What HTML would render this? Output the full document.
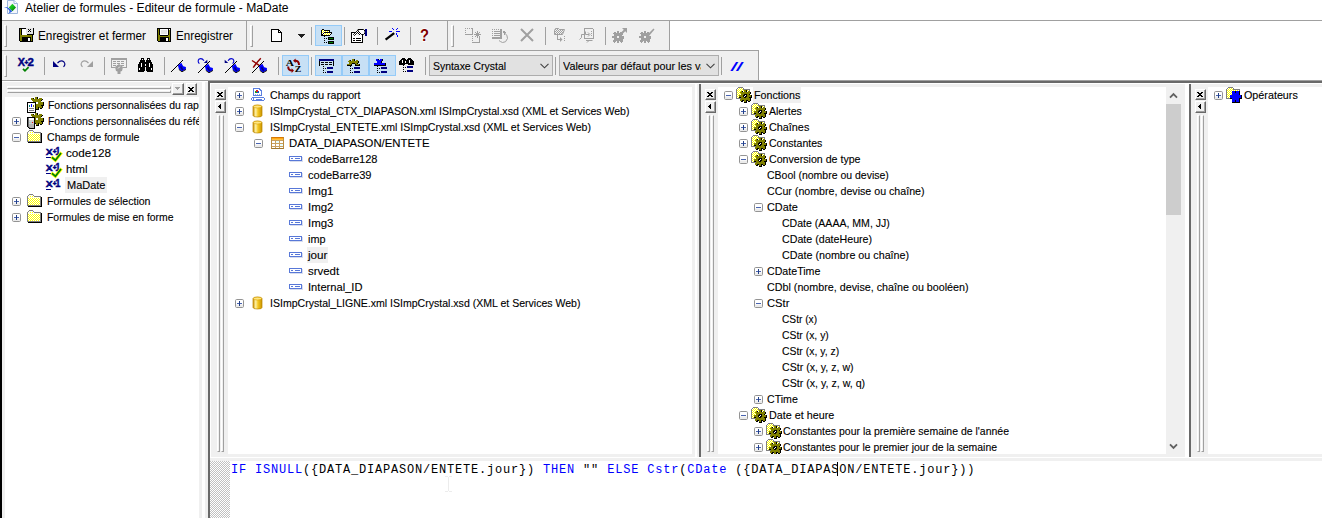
<!DOCTYPE html>
<html lang="fr"><head><meta charset="utf-8"><title>Atelier de formules - Editeur de formule - MaDate</title>
<style>
html,body{margin:0;padding:0;}
body{width:1322px;height:518px;position:relative;overflow:hidden;background:#fff;font-family:"Liberation Sans",sans-serif;}
.a{position:absolute;}
.t{position:absolute;white-space:pre;transform-origin:0 0;line-height:1;}
svg{position:absolute;overflow:visible;}
.mono{font-family:"Liberation Mono",monospace;}
.s{-webkit-text-stroke:0.12px currentColor;}

</style></head>
<body>
<svg width="0" height="0" style="left:0;top:0"><defs><pattern id="dy" width="2" height="2" patternUnits="userSpaceOnUse"><rect width="2" height="2" fill="#fff"/><rect width="1" height="1" fill="#ff0"/><rect x="1" y="1" width="1" height="1" fill="#ff0"/></pattern><pattern id="dk" width="2" height="2" patternUnits="userSpaceOnUse"><rect width="2" height="2" fill="#fff"/><rect width="1" height="1" fill="#000"/><rect x="1" y="1" width="1" height="1" fill="#000"/></pattern><pattern id="dg" width="2" height="2" patternUnits="userSpaceOnUse"><rect width="2" height="2" fill="#f0f0f0"/><rect width="1" height="1" fill="#a0a0a0"/><rect x="1" y="1" width="1" height="1" fill="#a0a0a0"/></pattern></defs></svg>
<div class="a" style="left:0px;top:0px;width:2px;height:518px;background:#000;"></div>
<svg style="left:3px;top:0px" width="16" height="15" viewBox="0 0 16 15" shape-rendering="crispEdges"><defs><linearGradient id="tig" x1="0" y1="0" x2="1" y2="1"><stop offset="0" stop-color="#30e030"/><stop offset="0.55" stop-color="#10b818"/><stop offset="1" stop-color="#004800"/></linearGradient></defs><path d="M4.5 0.5 H11 L14.5 3.5 V13.5 H4.5 Z" fill="#f4f7fc" stroke="#9db6dc" stroke-width="1" shape-rendering="auto"/><path d="M11 0.5 V3.5 H14.5" fill="#fff" stroke="#9db6dc" stroke-width="1" shape-rendering="auto"/><path d="M9.4 3.8 L13 7.5 L9.4 11.2 L5.8 7.5 Z" fill="url(#tig)" shape-rendering="auto"/><path d="M1 7 Q6.5 6.6 9.2 11.6 L5 13.9 Q7.4 12 6.2 10.2 Q4.8 8 1 7 Z" fill="#2a5fe0" shape-rendering="auto"/></svg>
<span class="t" id="t0" style="left:25px;top:2px;font-size:12px;color:#000;transform:scaleX(1.0078);">Atelier de formules - Editeur de formule - MaDate</span>
<div class="a" style="left:2px;top:20px;width:1320px;height:1px;background:#a0a0a0;"></div>
<div class="a" style="left:2px;top:21px;width:667px;height:29px;background:#f0f0f0;"></div>
<div class="a" style="left:669px;top:21px;width:1px;height:29px;background:#a0a0a0;"></div>
<div class="a" style="left:2px;top:50px;width:757px;height:1px;background:#a0a0a0;"></div>
<div class="a" style="left:2px;top:51px;width:756px;height:29px;background:#f0f0f0;"></div>
<div class="a" style="left:758px;top:51px;width:1px;height:29px;background:#a0a0a0;"></div>
<div class="a" style="left:2px;top:80px;width:1320px;height:1px;background:#a0a0a0;"></div>
<div class="a" style="left:208px;top:81px;width:1114px;height:2px;background:#696969;"></div>
<div class="a" style="left:4px;top:25px;width:3px;height:22px;background:#f0f0f0;border-left:1px solid #fff;border-top:1px solid #fff;border-right:1px solid #a0a0a0;border-bottom:1px solid #a0a0a0;box-sizing:border-box;"></div>
<svg style="left:19px;top:28px" width="15" height="14" viewBox="0 0 15 14" shape-rendering="crispEdges"><rect x="0" y="0" width="7" height="1" fill="#000"/><rect x="7" y="0" width="7" height="1" fill="#e4e4e4"/><rect x="14" y="0" width="1" height="1" fill="#000"/><rect x="0" y="1" width="1" height="1" fill="#000"/><rect x="1" y="1" width="1" height="1" fill="#808000"/><rect x="2" y="1" width="1" height="1" fill="#000"/><rect x="3" y="1" width="4" height="1" fill="#fff"/><rect x="7" y="1" width="2" height="1" fill="#e4e4e4"/><rect x="9" y="1" width="1" height="1" fill="#000"/><rect x="10" y="1" width="1" height="1" fill="#e4e4e4"/><rect x="11" y="1" width="1" height="1" fill="#000"/><rect x="12" y="1" width="2" height="1" fill="#e4e4e4"/><rect x="14" y="1" width="1" height="1" fill="#000"/><rect x="0" y="2" width="1" height="1" fill="#000"/><rect x="1" y="2" width="1" height="1" fill="#808000"/><rect x="2" y="2" width="1" height="1" fill="#000"/><rect x="3" y="2" width="4" height="1" fill="#fff"/><rect x="7" y="2" width="3" height="1" fill="#e4e4e4"/><rect x="10" y="2" width="1" height="1" fill="#000"/><rect x="11" y="2" width="3" height="1" fill="#e4e4e4"/><rect x="14" y="2" width="1" height="1" fill="#000"/><rect x="0" y="3" width="1" height="1" fill="#000"/><rect x="1" y="3" width="1" height="1" fill="#808000"/><rect x="2" y="3" width="1" height="1" fill="#000"/><rect x="3" y="3" width="4" height="1" fill="#fff"/><rect x="7" y="3" width="2" height="1" fill="#e4e4e4"/><rect x="9" y="3" width="1" height="1" fill="#000"/><rect x="10" y="3" width="1" height="1" fill="#e4e4e4"/><rect x="11" y="3" width="1" height="1" fill="#000"/><rect x="12" y="3" width="2" height="1" fill="#e4e4e4"/><rect x="14" y="3" width="1" height="1" fill="#000"/><rect x="0" y="4" width="1" height="1" fill="#000"/><rect x="1" y="4" width="1" height="1" fill="#808000"/><rect x="2" y="4" width="1" height="1" fill="#000"/><rect x="3" y="4" width="4" height="1" fill="#fff"/><rect x="7" y="4" width="7" height="1" fill="#e4e4e4"/><rect x="14" y="4" width="1" height="1" fill="#000"/><rect x="0" y="5" width="1" height="1" fill="#000"/><rect x="1" y="5" width="1" height="1" fill="#808000"/><rect x="2" y="5" width="1" height="1" fill="#000"/><rect x="3" y="5" width="4" height="1" fill="#fff"/><rect x="7" y="5" width="7" height="1" fill="#e4e4e4"/><rect x="14" y="5" width="1" height="1" fill="#000"/><rect x="0" y="6" width="1" height="1" fill="#000"/><rect x="1" y="6" width="1" height="1" fill="#808000"/><rect x="2" y="6" width="1" height="1" fill="#000"/><rect x="3" y="6" width="5" height="1" fill="#fff"/><rect x="8" y="6" width="7" height="1" fill="#000"/><rect x="0" y="7" width="1" height="1" fill="#000"/><rect x="1" y="7" width="12" height="1" fill="#808000"/><rect x="13" y="7" width="1" height="1" fill="#000"/><rect x="0" y="8" width="1" height="1" fill="#000"/><rect x="1" y="8" width="12" height="1" fill="#808000"/><rect x="13" y="8" width="1" height="1" fill="#000"/><rect x="0" y="9" width="1" height="1" fill="#000"/><rect x="1" y="9" width="2" height="1" fill="#808000"/><rect x="3" y="9" width="9" height="1" fill="#000"/><rect x="12" y="9" width="1" height="1" fill="#808000"/><rect x="13" y="9" width="1" height="1" fill="#000"/><rect x="0" y="10" width="1" height="1" fill="#000"/><rect x="1" y="10" width="2" height="1" fill="#808000"/><rect x="3" y="10" width="6" height="1" fill="#000"/><rect x="9" y="10" width="2" height="1" fill="#fff"/><rect x="11" y="10" width="1" height="1" fill="#000"/><rect x="12" y="10" width="1" height="1" fill="#808000"/><rect x="13" y="10" width="1" height="1" fill="#000"/><rect x="0" y="11" width="1" height="1" fill="#000"/><rect x="1" y="11" width="2" height="1" fill="#808000"/><rect x="3" y="11" width="6" height="1" fill="#000"/><rect x="9" y="11" width="2" height="1" fill="#fff"/><rect x="11" y="11" width="1" height="1" fill="#000"/><rect x="12" y="11" width="1" height="1" fill="#808000"/><rect x="13" y="11" width="1" height="1" fill="#000"/><rect x="0" y="12" width="1" height="1" fill="#000"/><rect x="1" y="12" width="2" height="1" fill="#808000"/><rect x="3" y="12" width="6" height="1" fill="#000"/><rect x="9" y="12" width="2" height="1" fill="#fff"/><rect x="11" y="12" width="1" height="1" fill="#000"/><rect x="12" y="12" width="1" height="1" fill="#808000"/><rect x="13" y="12" width="1" height="1" fill="#000"/><rect x="1" y="13" width="13" height="1" fill="#000"/></svg>
<span class="t" id="t1" style="left:38px;top:30px;font-size:12px;color:#000;transform:scaleX(0.9814);">Enregistrer et fermer</span>
<svg style="left:157px;top:28px" width="14" height="14" viewBox="0 0 14 14" shape-rendering="crispEdges"><rect x="0" y="0" width="14" height="1" fill="#000"/><rect x="0" y="1" width="1" height="1" fill="#000"/><rect x="1" y="1" width="1" height="1" fill="#808000"/><rect x="2" y="1" width="1" height="1" fill="#000"/><rect x="3" y="1" width="8" height="1" fill="#fff"/><rect x="11" y="1" width="1" height="1" fill="#000"/><rect x="12" y="1" width="1" height="1" fill="#fff"/><rect x="13" y="1" width="1" height="1" fill="#000"/><rect x="0" y="2" width="1" height="1" fill="#000"/><rect x="1" y="2" width="1" height="1" fill="#808000"/><rect x="2" y="2" width="1" height="1" fill="#000"/><rect x="3" y="2" width="1" height="1" fill="#fff"/><rect x="4" y="2" width="6" height="1" fill="#e4e4e4"/><rect x="10" y="2" width="1" height="1" fill="#fff"/><rect x="11" y="2" width="1" height="1" fill="#000"/><rect x="12" y="2" width="1" height="1" fill="#808000"/><rect x="13" y="2" width="1" height="1" fill="#000"/><rect x="0" y="3" width="1" height="1" fill="#000"/><rect x="1" y="3" width="1" height="1" fill="#808000"/><rect x="2" y="3" width="1" height="1" fill="#000"/><rect x="3" y="3" width="1" height="1" fill="#fff"/><rect x="4" y="3" width="6" height="1" fill="#e4e4e4"/><rect x="10" y="3" width="1" height="1" fill="#fff"/><rect x="11" y="3" width="1" height="1" fill="#000"/><rect x="12" y="3" width="1" height="1" fill="#808000"/><rect x="13" y="3" width="1" height="1" fill="#000"/><rect x="0" y="4" width="1" height="1" fill="#000"/><rect x="1" y="4" width="1" height="1" fill="#808000"/><rect x="2" y="4" width="1" height="1" fill="#000"/><rect x="3" y="4" width="1" height="1" fill="#fff"/><rect x="4" y="4" width="6" height="1" fill="#e4e4e4"/><rect x="10" y="4" width="1" height="1" fill="#fff"/><rect x="11" y="4" width="1" height="1" fill="#000"/><rect x="12" y="4" width="1" height="1" fill="#808000"/><rect x="13" y="4" width="1" height="1" fill="#000"/><rect x="0" y="5" width="1" height="1" fill="#000"/><rect x="1" y="5" width="1" height="1" fill="#808000"/><rect x="2" y="5" width="1" height="1" fill="#000"/><rect x="3" y="5" width="1" height="1" fill="#fff"/><rect x="4" y="5" width="6" height="1" fill="#e4e4e4"/><rect x="10" y="5" width="1" height="1" fill="#fff"/><rect x="11" y="5" width="1" height="1" fill="#000"/><rect x="12" y="5" width="1" height="1" fill="#808000"/><rect x="13" y="5" width="1" height="1" fill="#000"/><rect x="0" y="6" width="1" height="1" fill="#000"/><rect x="1" y="6" width="1" height="1" fill="#808000"/><rect x="2" y="6" width="1" height="1" fill="#000"/><rect x="3" y="6" width="8" height="1" fill="#fff"/><rect x="11" y="6" width="1" height="1" fill="#000"/><rect x="12" y="6" width="1" height="1" fill="#808000"/><rect x="13" y="6" width="1" height="1" fill="#000"/><rect x="0" y="7" width="1" height="1" fill="#000"/><rect x="1" y="7" width="2" height="1" fill="#808000"/><rect x="3" y="7" width="8" height="1" fill="#000"/><rect x="11" y="7" width="2" height="1" fill="#808000"/><rect x="13" y="7" width="1" height="1" fill="#000"/><rect x="0" y="8" width="1" height="1" fill="#000"/><rect x="1" y="8" width="12" height="1" fill="#808000"/><rect x="13" y="8" width="1" height="1" fill="#000"/><rect x="0" y="9" width="1" height="1" fill="#000"/><rect x="1" y="9" width="2" height="1" fill="#808000"/><rect x="3" y="9" width="9" height="1" fill="#000"/><rect x="12" y="9" width="1" height="1" fill="#808000"/><rect x="13" y="9" width="1" height="1" fill="#000"/><rect x="0" y="10" width="1" height="1" fill="#000"/><rect x="1" y="10" width="2" height="1" fill="#808000"/><rect x="3" y="10" width="6" height="1" fill="#000"/><rect x="9" y="10" width="2" height="1" fill="#fff"/><rect x="11" y="10" width="1" height="1" fill="#000"/><rect x="12" y="10" width="1" height="1" fill="#808000"/><rect x="13" y="10" width="1" height="1" fill="#000"/><rect x="0" y="11" width="1" height="1" fill="#000"/><rect x="1" y="11" width="2" height="1" fill="#808000"/><rect x="3" y="11" width="6" height="1" fill="#000"/><rect x="9" y="11" width="2" height="1" fill="#fff"/><rect x="11" y="11" width="1" height="1" fill="#000"/><rect x="12" y="11" width="1" height="1" fill="#808000"/><rect x="13" y="11" width="1" height="1" fill="#000"/><rect x="0" y="12" width="1" height="1" fill="#000"/><rect x="1" y="12" width="2" height="1" fill="#808000"/><rect x="3" y="12" width="6" height="1" fill="#000"/><rect x="9" y="12" width="2" height="1" fill="#fff"/><rect x="11" y="12" width="1" height="1" fill="#000"/><rect x="12" y="12" width="1" height="1" fill="#808000"/><rect x="13" y="12" width="1" height="1" fill="#000"/><rect x="1" y="13" width="13" height="1" fill="#000"/></svg>
<span class="t" id="t2" style="left:176px;top:30px;font-size:12px;color:#000;transform:scaleX(0.9712);">Enregistrer</span>
<div class="a" style="left:246px;top:21px;width:1px;height:29px;background:#a0a0a0;"></div>
<div class="a" style="left:250px;top:25px;width:3px;height:22px;background:#f0f0f0;border-left:1px solid #fff;border-top:1px solid #fff;border-right:1px solid #a0a0a0;border-bottom:1px solid #a0a0a0;box-sizing:border-box;"></div>
<svg style="left:271px;top:29px" width="11" height="13" viewBox="0 0 11 13" shape-rendering="crispEdges"><path d="M0.5 0.5 H7.5 L10.5 3.5 V12.5 H0.5 Z" fill="#fff" stroke="#000" stroke-width="1" shape-rendering="crispEdges"/><path d="M7.5 0.5 V3.5 H10.5" fill="none" stroke="#000" stroke-width="1"/></svg>
<svg style="left:298px;top:34px" width="7" height="4" viewBox="0 0 7 4" shape-rendering="crispEdges"><rect x="0" y="0" width="7" height="1" fill="#202020"/><rect x="1" y="1" width="5" height="1" fill="#202020"/><rect x="2" y="2" width="3" height="1" fill="#202020"/><rect x="3" y="3" width="1" height="1" fill="#202020"/></svg>
<div class="a" style="left:311px;top:27px;width:1px;height:18px;background:#a0a0a0;"></div>
<div class="a" style="left:315px;top:25px;width:27px;height:21px;background:#c7e0f5;box-sizing:border-box;border:1px solid #95cbf8;"></div>
<svg style="left:320px;top:28px" width="16" height="16" viewBox="0 0 16 16" shape-rendering="crispEdges"><rect x="2" y="1" width="2" height="1" fill="#000"/><rect x="1" y="2" width="1" height="1" fill="#000"/><rect x="2" y="2" width="2" height="1" fill="url(#dy)"/><rect x="4" y="2" width="6" height="1" fill="#000"/><rect x="1" y="3" width="1" height="1" fill="#000"/><rect x="2" y="3" width="7" height="1" fill="url(#dy)"/><rect x="9" y="3" width="1" height="1" fill="#000"/><rect x="1" y="4" width="1" height="1" fill="#000"/><rect x="2" y="4" width="2" height="1" fill="url(#dy)"/><rect x="4" y="4" width="8" height="1" fill="#000"/><rect x="1" y="5" width="1" height="1" fill="#000"/><rect x="2" y="5" width="1" height="1" fill="url(#dy)"/><rect x="3" y="5" width="1" height="1" fill="#000"/><rect x="4" y="5" width="7" height="1" fill="url(#dy)"/><rect x="11" y="5" width="1" height="1" fill="#000"/><rect x="1" y="6" width="2" height="1" fill="#000"/><rect x="3" y="6" width="7" height="1" fill="url(#dy)"/><rect x="10" y="6" width="1" height="1" fill="#000"/><rect x="1" y="7" width="9" height="1" fill="#000"/><rect x="4" y="8" width="1" height="1" fill="#000"/><rect x="8" y="9" width="6" height="1" fill="#000"/><rect x="4" y="10" width="1" height="1" fill="#000"/><rect x="6" y="10" width="1" height="1" fill="#000"/><rect x="8" y="10" width="1" height="1" fill="#000"/><rect x="9" y="10" width="4" height="1" fill="#008000"/><rect x="13" y="10" width="1" height="1" fill="#000"/><rect x="8" y="11" width="6" height="1" fill="#000"/><rect x="4" y="12" width="1" height="1" fill="#000"/><rect x="8" y="13" width="6" height="1" fill="#000"/><rect x="4" y="14" width="1" height="1" fill="#000"/><rect x="6" y="14" width="1" height="1" fill="#000"/><rect x="8" y="14" width="1" height="1" fill="#000"/><rect x="9" y="14" width="4" height="1" fill="#008000"/><rect x="13" y="14" width="1" height="1" fill="#000"/><rect x="8" y="15" width="6" height="1" fill="#000"/></svg>
<div class="a" style="left:344px;top:27px;width:1px;height:18px;background:#a0a0a0;"></div>
<svg style="left:351px;top:28px" width="16" height="16" viewBox="0 0 16 16" shape-rendering="crispEdges"><rect x="0.5" y="4.5" width="11" height="10" fill="#fff" stroke="#000" stroke-width="1"/><rect x="2" y="10" width="2" height="1" fill="#000"/><rect x="5" y="10" width="5" height="1" fill="#000"/><rect x="2" y="12" width="2" height="1" fill="#000"/><rect x="5" y="12" width="5" height="1" fill="#000"/><path d="M2 6.5 L6.5 2 L10 5.5 L8.5 8 L6 5.5 L3.5 8 Z" fill="url(#dk)" shape-rendering="auto"/><path d="M7 1.5 H12.5 L14 3 V5 L12.5 6.5 H10.5 L7 3 Z" fill="#fff" stroke="#000" stroke-width="1" shape-rendering="auto"/><rect x="14" y="1" width="2" height="7" fill="#000080"/></svg>
<div class="a" style="left:377px;top:27px;width:1px;height:18px;background:#a0a0a0;"></div>
<svg style="left:384px;top:28px" width="16" height="16" viewBox="0 0 16 16" shape-rendering="crispEdges"><path d="M1.6 11.6 L10.2 5.2" stroke="#000" stroke-width="2.3" shape-rendering="auto"/><rect x="5" y="3" width="3" height="1" fill="#0000ff"/><rect x="12" y="3" width="4" height="1" fill="#0000ff"/><rect x="8" y="0" width="1" height="1" fill="#0000ff"/><rect x="9" y="1" width="1" height="1" fill="#0000ff"/><rect x="13" y="0" width="1" height="1" fill="#0000ff"/><rect x="12" y="1" width="1" height="1" fill="#0000ff"/><rect x="12" y="5" width="1" height="2" fill="#0000ff"/><rect x="13" y="7" width="1" height="2" fill="#0000ff"/></svg>
<div class="a" style="left:410px;top:27px;width:1px;height:18px;background:#a0a0a0;"></div>
<svg style="left:420px;top:29px" width="9" height="13" viewBox="0 0 9 13" shape-rendering="crispEdges"><text x="0" y="12" font-family="Liberation Sans,sans-serif" font-weight="bold" font-size="16.8" fill="#800000" stroke="#fafafa" stroke-width="2" paint-order="stroke" textLength="9" lengthAdjust="spacingAndGlyphs" shape-rendering="auto">?</text></svg>
<div class="a" style="left:447px;top:21px;width:1px;height:29px;background:#a0a0a0;"></div>
<div class="a" style="left:451px;top:25px;width:3px;height:22px;background:#f0f0f0;border-left:1px solid #fff;border-top:1px solid #fff;border-right:1px solid #a0a0a0;border-bottom:1px solid #a0a0a0;box-sizing:border-box;"></div>
<svg style="left:465px;top:28px" width="16" height="15" viewBox="0 0 16 15" shape-rendering="crispEdges"><rect x="0" y="0" width="1" height="1" fill="#a0a0a0"/><rect x="2" y="0" width="1" height="1" fill="#a0a0a0"/><rect x="4" y="0" width="1" height="1" fill="#a0a0a0"/><rect x="6" y="0" width="1" height="1" fill="#a0a0a0"/><rect x="0" y="2" width="1" height="1" fill="#a0a0a0"/><rect x="0" y="4" width="1" height="1" fill="#a0a0a0"/><rect x="7" y="0" width="1" height="7" fill="#a0a0a0"/><rect x="0" y="6" width="8" height="1" fill="#a0a0a0"/><rect x="7" y="8" width="1" height="1" fill="#a0a0a0"/><rect x="7" y="10" width="1" height="1" fill="#a0a0a0"/><rect x="7" y="12" width="1" height="1" fill="#a0a0a0"/><rect x="14" y="8" width="1" height="7" fill="#a0a0a0"/><rect x="7" y="14" width="8" height="1" fill="#a0a0a0"/><rect x="12" y="3" width="1" height="7" fill="#a0a0a0"/><rect x="9" y="6" width="7" height="1" fill="#a0a0a0"/><rect x="11" y="5" width="1" height="1" fill="#a0a0a0"/><rect x="13" y="5" width="1" height="1" fill="#a0a0a0"/><rect x="11" y="7" width="1" height="1" fill="#a0a0a0"/><rect x="13" y="7" width="1" height="1" fill="#a0a0a0"/><rect x="10" y="4" width="1" height="1" fill="#a0a0a0"/><rect x="14" y="4" width="1" height="1" fill="#a0a0a0"/><rect x="10" y="8" width="1" height="1" fill="#a0a0a0"/><rect x="14" y="8" width="1" height="1" fill="#a0a0a0"/></svg>
<svg style="left:492px;top:29px" width="16" height="15" viewBox="0 0 16 15" shape-rendering="crispEdges"><rect x="0" y="0" width="1" height="1" fill="#a0a0a0"/><rect x="2" y="0" width="1" height="1" fill="#a0a0a0"/><rect x="4" y="0" width="1" height="1" fill="#a0a0a0"/><rect x="6" y="0" width="1" height="1" fill="#a0a0a0"/><rect x="0" y="2" width="1" height="1" fill="#a0a0a0"/><rect x="2" y="2" width="6" height="1" fill="#a0a0a0"/><rect x="0" y="4" width="1" height="1" fill="#a0a0a0"/><rect x="2" y="4" width="6" height="1" fill="#a0a0a0"/><rect x="0" y="6" width="1" height="1" fill="#a0a0a0"/><rect x="2" y="6" width="6" height="1" fill="#a0a0a0"/><rect x="8" y="0" width="2" height="10" fill="#a0a0a0"/><rect x="0" y="8" width="10" height="2" fill="#a0a0a0"/><path d="M12 3.5 Q16 6 15.5 9.5 Q14 14 10.5 13.5 Q8 12.5 7 11.5" fill="none" stroke="#a0a0a0" stroke-width="1" shape-rendering="auto"/><path d="M11 3.5 H14 M12.5 2 V6 M11.5 2.5 L13.5 4.5" stroke="#a0a0a0" stroke-width="1" fill="none"/></svg>
<svg style="left:520px;top:28px" width="14" height="14" viewBox="0 0 14 14" shape-rendering="crispEdges"><path d="M1 1 L13 13 M13 1 L1 13" stroke="#a0a0a0" stroke-width="2" shape-rendering="auto"/></svg>
<div class="a" style="left:545px;top:27px;width:1px;height:18px;background:#a0a0a0;"></div>
<svg style="left:554px;top:28px" width="12" height="15" viewBox="0 0 12 15" shape-rendering="crispEdges"><path d="M0.5 2.5 L1.5 0.5 H4.5 L5.5 1.5 H10.5 L8.5 6.5 H0.5 Z" fill="url(#dg)" stroke="#a0a0a0" stroke-width="1" shape-rendering="auto"/><path d="M3.5 7 V11.5 H6" fill="none" stroke="#a0a0a0" stroke-width="1"/><path d="M6 9 L8.5 11.5 L6 14 Z" fill="#a0a0a0" shape-rendering="auto"/><rect x="10" y="8" width="1" height="1" fill="#a0a0a0"/><rect x="10" y="10" width="1" height="1" fill="#a0a0a0"/><rect x="10" y="12" width="1" height="1" fill="#a0a0a0"/></svg>
<svg style="left:579px;top:28px" width="16" height="15" viewBox="0 0 16 15" shape-rendering="crispEdges"><path d="M5.5 0.5 H13.5 L14.5 1.5 V10.5 H5.5 Z" fill="none" stroke="#a0a0a0" stroke-width="1"/><path d="M6.5 3.5 V6.5 H10 M9 4.5 L11 6.5 L9 8.5" fill="none" stroke="#a0a0a0" stroke-width="1" shape-rendering="auto"/><rect x="12" y="3" width="1" height="1" fill="#a0a0a0"/><rect x="12" y="5" width="1" height="1" fill="#a0a0a0"/><rect x="12" y="7" width="1" height="1" fill="#a0a0a0"/><path d="M0.5 11.5 L2.5 9.5 V6.5 H5.5" fill="none" stroke="#a0a0a0" stroke-width="1" shape-rendering="auto"/><path d="M7 12.5 H13.5 M8 14.5 L10 12.5" fill="none" stroke="#a0a0a0" stroke-width="1" shape-rendering="auto"/></svg>
<div class="a" style="left:605px;top:27px;width:1px;height:18px;background:#a0a0a0;"></div>
<svg style="left:612px;top:28px" width="16" height="15" viewBox="0 0 16 15" shape-rendering="crispEdges"><rect x="5" y="3" width="2" height="1" fill="#a0a0a0"/><rect x="2" y="4" width="2" height="1" fill="#a0a0a0"/><rect x="5" y="4" width="2" height="1" fill="#a0a0a0"/><rect x="8" y="4" width="2" height="1" fill="#a0a0a0"/><rect x="1" y="5" width="10" height="1" fill="#a0a0a0"/><rect x="2" y="6" width="9" height="1" fill="#a0a0a0"/><rect x="2" y="7" width="8" height="1" fill="#a0a0a0"/><rect x="0" y="8" width="5" height="1" fill="#a0a0a0"/><rect x="7" y="8" width="5" height="1" fill="#a0a0a0"/><rect x="0" y="9" width="5" height="1" fill="#a0a0a0"/><rect x="7" y="9" width="5" height="1" fill="#a0a0a0"/><rect x="2" y="10" width="10" height="1" fill="#a0a0a0"/><rect x="2" y="11" width="9" height="1" fill="#a0a0a0"/><rect x="1" y="12" width="10" height="1" fill="#a0a0a0"/><rect x="1" y="13" width="3" height="1" fill="#a0a0a0"/><rect x="5" y="13" width="2" height="1" fill="#a0a0a0"/><rect x="8" y="13" width="3" height="1" fill="#a0a0a0"/><rect x="2" y="14" width="1" height="1" fill="#a0a0a0"/><rect x="5" y="14" width="2" height="1" fill="#a0a0a0"/><rect x="9" y="14" width="1" height="1" fill="#a0a0a0"/><path d="M9 6 L14 1" stroke="#a0a0a0" stroke-width="2" shape-rendering="auto"/><path d="M10 0 H15 V5 Z" fill="#a0a0a0" shape-rendering="auto"/></svg>
<svg style="left:639px;top:28px" width="16" height="15" viewBox="0 0 16 15" shape-rendering="crispEdges"><rect x="5" y="3" width="2" height="1" fill="#a0a0a0"/><rect x="2" y="4" width="2" height="1" fill="#a0a0a0"/><rect x="5" y="4" width="2" height="1" fill="#a0a0a0"/><rect x="8" y="4" width="2" height="1" fill="#a0a0a0"/><rect x="1" y="5" width="10" height="1" fill="#a0a0a0"/><rect x="2" y="6" width="9" height="1" fill="#a0a0a0"/><rect x="2" y="7" width="8" height="1" fill="#a0a0a0"/><rect x="0" y="8" width="5" height="1" fill="#a0a0a0"/><rect x="7" y="8" width="5" height="1" fill="#a0a0a0"/><rect x="0" y="9" width="5" height="1" fill="#a0a0a0"/><rect x="7" y="9" width="5" height="1" fill="#a0a0a0"/><rect x="2" y="10" width="10" height="1" fill="#a0a0a0"/><rect x="2" y="11" width="9" height="1" fill="#a0a0a0"/><rect x="1" y="12" width="10" height="1" fill="#a0a0a0"/><rect x="1" y="13" width="3" height="1" fill="#a0a0a0"/><rect x="5" y="13" width="2" height="1" fill="#a0a0a0"/><rect x="8" y="13" width="3" height="1" fill="#a0a0a0"/><rect x="2" y="14" width="1" height="1" fill="#a0a0a0"/><rect x="5" y="14" width="2" height="1" fill="#a0a0a0"/><rect x="9" y="14" width="1" height="1" fill="#a0a0a0"/><path d="M8 7 L14.5 0.5 L15.5 1.5 L10 8 Z" fill="#a0a0a0" shape-rendering="auto"/></svg>
<div class="a" style="left:4px;top:55px;width:3px;height:22px;background:#f0f0f0;border-left:1px solid #fff;border-top:1px solid #fff;border-right:1px solid #a0a0a0;border-bottom:1px solid #a0a0a0;box-sizing:border-box;"></div>
<svg style="left:18px;top:58px" width="16" height="15" viewBox="0 0 16 15" shape-rendering="crispEdges"><text x="-0.2" y="8" font-size="10.6" font-family="Liberation Sans,sans-serif" font-weight="bold" fill="#000080" stroke="#000080" stroke-width="0.45" shape-rendering="auto" textLength="7.2" lengthAdjust="spacingAndGlyphs">X</text><text x="6.6" y="6.6" font-size="6.4" font-family="Liberation Sans,sans-serif" font-weight="bold" fill="#000080" stroke="#000080" stroke-width="0.45" shape-rendering="auto">+</text><text x="9.4" y="8" font-size="11.4" font-family="Liberation Sans,sans-serif" font-weight="bold" fill="#000080" stroke="#000080" stroke-width="0.45" shape-rendering="auto" textLength="6.4" lengthAdjust="spacingAndGlyphs">2</text><path d="M5 10.8 L7 12.8 L10.6 9.2" fill="none" stroke="#008000" stroke-width="1.8" shape-rendering="auto"/></svg>
<div class="a" style="left:44px;top:57px;width:1px;height:18px;background:#a0a0a0;"></div>
<svg style="left:53px;top:60px" width="13" height="8" viewBox="0 0 13 8" shape-rendering="crispEdges"><path d="M0 1 V7 H6 Z" fill="#000080" shape-rendering="auto"/><path d="M4.5 3 Q8 -0.5 11 2 Q13 4.5 10.5 6.8" fill="none" stroke="#000080" stroke-width="1.15" shape-rendering="auto"/></svg>
<svg style="left:80px;top:60px" width="13" height="8" viewBox="0 0 13 8" shape-rendering="crispEdges"><g transform="translate(13,0) scale(-1,1)"><path d="M0 1 V7 H6 Z" fill="#a0a0a0" shape-rendering="auto"/><path d="M4.5 3 Q8 -0.5 11 2 Q13 4.5 10.5 6.8" fill="none" stroke="#a0a0a0" stroke-width="1.15" shape-rendering="auto"/></g></svg>
<div class="a" style="left:104px;top:57px;width:1px;height:18px;background:#a0a0a0;"></div>
<svg style="left:111px;top:58px" width="16" height="16" viewBox="0 0 16 16" shape-rendering="crispEdges"><rect x="0" y="0" width="16" height="2" fill="#a0a0a0"/><rect x="0" y="2" width="1" height="8" fill="#a0a0a0"/><rect x="15" y="2" width="1" height="8" fill="#a0a0a0"/><rect x="2" y="3" width="3" height="1" fill="#a0a0a0"/><rect x="6" y="3" width="3" height="1" fill="#a0a0a0"/><rect x="10" y="3" width="3" height="1" fill="#a0a0a0"/><rect x="2" y="5" width="3" height="1" fill="#a0a0a0"/><rect x="6" y="5" width="3" height="1" fill="#a0a0a0"/><rect x="10" y="5" width="3" height="1" fill="#a0a0a0"/><rect x="2" y="7" width="3" height="1" fill="#a0a0a0"/><rect x="6" y="7" width="3" height="1" fill="#a0a0a0"/><rect x="10" y="7" width="3" height="1" fill="#a0a0a0"/><rect x="0" y="9" width="4" height="1" fill="#a0a0a0"/><rect x="12" y="9" width="4" height="1" fill="#a0a0a0"/><path d="M8 6 L12 9 L11 13 L9.5 13.5 V16 H6.5 V13.5 L5 13 L4 9 Z" fill="#a0a0a0" shape-rendering="auto"/><path d="M7 10.5 L9 8.5" stroke="#f0f0f0" stroke-width="1" shape-rendering="auto"/></svg>
<svg style="left:138px;top:58px" width="15" height="14" viewBox="0 0 15 14" shape-rendering="crispEdges"><rect x="3" y="0" width="3" height="1" fill="#000"/><rect x="9" y="0" width="3" height="1" fill="#000"/><rect x="3" y="1" width="1" height="1" fill="#000"/><rect x="4" y="1" width="1" height="1" fill="#fff"/><rect x="5" y="1" width="1" height="1" fill="#000"/><rect x="9" y="1" width="1" height="1" fill="#000"/><rect x="10" y="1" width="1" height="1" fill="#fff"/><rect x="11" y="1" width="1" height="1" fill="#000"/><rect x="2" y="2" width="5" height="1" fill="#000"/><rect x="8" y="2" width="5" height="1" fill="#000"/><rect x="2" y="3" width="5" height="1" fill="#000"/><rect x="8" y="3" width="5" height="1" fill="#000"/><rect x="1" y="4" width="13" height="1" fill="#000"/><rect x="1" y="5" width="2" height="1" fill="#000"/><rect x="3" y="5" width="1" height="1" fill="#fff"/><rect x="4" y="5" width="7" height="1" fill="#000"/><rect x="11" y="5" width="1" height="1" fill="#fff"/><rect x="12" y="5" width="2" height="1" fill="#000"/><rect x="0" y="6" width="3" height="1" fill="#000"/><rect x="3" y="6" width="1" height="1" fill="#fff"/><rect x="4" y="6" width="3" height="1" fill="#000"/><rect x="7" y="6" width="1" height="1" fill="#fff"/><rect x="8" y="6" width="3" height="1" fill="#000"/><rect x="11" y="6" width="1" height="1" fill="#fff"/><rect x="12" y="6" width="3" height="1" fill="#000"/><rect x="0" y="7" width="3" height="1" fill="#000"/><rect x="3" y="7" width="1" height="1" fill="#fff"/><rect x="4" y="7" width="3" height="1" fill="#000"/><rect x="7" y="7" width="1" height="1" fill="#fff"/><rect x="8" y="7" width="3" height="1" fill="#000"/><rect x="11" y="7" width="1" height="1" fill="#fff"/><rect x="12" y="7" width="3" height="1" fill="#000"/><rect x="0" y="8" width="3" height="1" fill="#000"/><rect x="3" y="8" width="1" height="1" fill="#fff"/><rect x="4" y="8" width="7" height="1" fill="#000"/><rect x="11" y="8" width="1" height="1" fill="#fff"/><rect x="12" y="8" width="3" height="1" fill="#000"/><rect x="0" y="9" width="7" height="1" fill="#000"/><rect x="8" y="9" width="7" height="1" fill="#000"/><rect x="0" y="10" width="1" height="1" fill="#000"/><rect x="1" y="10" width="1" height="1" fill="#fff"/><rect x="2" y="10" width="5" height="1" fill="#000"/><rect x="8" y="10" width="5" height="1" fill="#000"/><rect x="13" y="10" width="1" height="1" fill="#fff"/><rect x="14" y="10" width="1" height="1" fill="#000"/><rect x="0" y="11" width="1" height="1" fill="#000"/><rect x="1" y="11" width="1" height="1" fill="#fff"/><rect x="2" y="11" width="5" height="1" fill="#000"/><rect x="8" y="11" width="5" height="1" fill="#000"/><rect x="13" y="11" width="1" height="1" fill="#fff"/><rect x="14" y="11" width="1" height="1" fill="#000"/><rect x="0" y="12" width="7" height="1" fill="#000"/><rect x="8" y="12" width="7" height="1" fill="#000"/><rect x="0" y="13" width="6" height="1" fill="#000"/><rect x="9" y="13" width="6" height="1" fill="#000"/></svg>
<div class="a" style="left:164px;top:57px;width:1px;height:18px;background:#a0a0a0;"></div>
<svg style="left:171px;top:60px" width="16" height="13" viewBox="0 0 16 13" shape-rendering="crispEdges"><path d="M0 12 L12 0" stroke="#000" stroke-width="1" shape-rendering="auto"/><path d="M6.9 5.5 L10.3 2.8 L12.2 6.2 L14.9 7 L14.9 9.3 L11 11.6 L8 9.3 Z" fill="#0000ff" shape-rendering="auto"/><path d="M9.6 6.3 L11.8 10.2" stroke="#000080" stroke-width="1.6" shape-rendering="auto"/><path d="M15 9.4 L11 11.8 L7.8 9.4" fill="none" stroke="#000" stroke-width="0.9" shape-rendering="auto"/></svg>
<svg style="left:198px;top:61px" width="16" height="13" viewBox="0 0 16 13" shape-rendering="crispEdges"><path d="M6 -0.3 Q4 -3.2 1.2 -2 Q-1 0 1.4 2.6" fill="none" stroke="#0000d0" stroke-width="1.1" shape-rendering="auto"/><path d="M9.3 -1.2 V2 H5.8 Z" fill="#000080" shape-rendering="auto"/><path d="M0 12 L12 0" stroke="#000" stroke-width="1" shape-rendering="auto"/><path d="M6.9 5.5 L10.3 2.8 L12.2 6.2 L14.9 7 L14.9 9.3 L11 11.6 L8 9.3 Z" fill="#0000ff" shape-rendering="auto"/><path d="M9.6 6.3 L11.8 10.2" stroke="#000080" stroke-width="1.6" shape-rendering="auto"/><path d="M15 9.4 L11 11.8 L7.8 9.4" fill="none" stroke="#000" stroke-width="0.9" shape-rendering="auto"/></svg>
<svg style="left:225px;top:61px" width="16" height="13" viewBox="0 0 16 13" shape-rendering="crispEdges"><path d="M3 -0.3 Q5 -3.2 7.8 -2 Q10 0 7.6 2.6" fill="none" stroke="#0000d0" stroke-width="1.1" shape-rendering="auto"/><path d="M-0.3 -1.2 V2 H3.2 Z" fill="#000080" shape-rendering="auto"/><path d="M0 12 L12 0" stroke="#000" stroke-width="1" shape-rendering="auto"/><path d="M6.9 5.5 L10.3 2.8 L12.2 6.2 L14.9 7 L14.9 9.3 L11 11.6 L8 9.3 Z" fill="#0000ff" shape-rendering="auto"/><path d="M9.6 6.3 L11.8 10.2" stroke="#000080" stroke-width="1.6" shape-rendering="auto"/><path d="M15 9.4 L11 11.8 L7.8 9.4" fill="none" stroke="#000" stroke-width="0.9" shape-rendering="auto"/></svg>
<svg style="left:252px;top:61px" width="16" height="13" viewBox="0 0 16 13" shape-rendering="crispEdges"><path d="M0 -0.5 L9 5.6 M8.8 -2.8 Q5 1 1.2 6.6" fill="none" stroke="#900000" stroke-width="1.4" shape-rendering="auto"/><path d="M0 12 L12 0" stroke="#000" stroke-width="1" shape-rendering="auto"/><path d="M6.9 5.5 L10.3 2.8 L12.2 6.2 L14.9 7 L14.9 9.3 L11 11.6 L8 9.3 Z" fill="#0000ff" shape-rendering="auto"/><path d="M9.6 6.3 L11.8 10.2" stroke="#000080" stroke-width="1.6" shape-rendering="auto"/><path d="M15 9.4 L11 11.8 L7.8 9.4" fill="none" stroke="#000" stroke-width="0.9" shape-rendering="auto"/></svg>
<div class="a" style="left:278px;top:57px;width:1px;height:18px;background:#a0a0a0;"></div>
<div class="a" style="left:282px;top:55px;width:27px;height:21px;background:#c7e0f5;box-sizing:border-box;border:1px solid #95cbf8;"></div>
<svg style="left:286px;top:59px" width="16" height="14" viewBox="0 0 16 14" shape-rendering="crispEdges"><text x="-0.3" y="6.5" font-family="Liberation Serif,serif" font-weight="bold" font-size="8.6" fill="#000" textLength="8.2" lengthAdjust="spacingAndGlyphs">A</text><text x="8.8" y="13" font-family="Liberation Serif,serif" font-weight="bold" font-size="9" fill="#000" textLength="6.6" lengthAdjust="spacingAndGlyphs">Z</text><path d="M9 1.7 Q13 1.6 13 6" fill="none" stroke="#8b0000" stroke-width="2" shape-rendering="auto"/><path d="M7 1.7 L9.6 -0.6 V4 Z" fill="#8b0000" shape-rendering="auto"/><path d="M6.2 11.6 Q2.2 11.6 2.2 7.4" fill="none" stroke="#8b0000" stroke-width="2" shape-rendering="auto"/><path d="M8 11.6 L5.6 13.9 V9.3 Z" fill="#8b0000" shape-rendering="auto"/></svg>
<div class="a" style="left:311px;top:57px;width:1px;height:18px;background:#a0a0a0;"></div>
<div class="a" style="left:315px;top:55px;width:27px;height:21px;background:#c7e0f5;box-sizing:border-box;border:1px solid #95cbf8;"></div>
<div class="a" style="left:342px;top:55px;width:27px;height:21px;background:#c7e0f5;box-sizing:border-box;border:1px solid #95cbf8;"></div>
<div class="a" style="left:369px;top:55px;width:27px;height:21px;background:#c7e0f5;box-sizing:border-box;border:1px solid #95cbf8;"></div>
<svg style="left:319px;top:59px" width="16" height="15" viewBox="0 0 16 15" shape-rendering="crispEdges"><rect x="0" y="0" width="15" height="2" fill="#000080"/><rect x="0" y="2" width="1" height="5" fill="#000"/><rect x="14" y="2" width="1" height="5" fill="#000"/><rect x="2" y="3" width="3" height="1" fill="#000"/><rect x="6" y="3" width="3" height="1" fill="#000"/><rect x="10" y="3" width="3" height="1" fill="#000"/><rect x="2" y="5" width="3" height="1" fill="#000"/><rect x="6" y="5" width="3" height="1" fill="#000"/><rect x="10" y="5" width="3" height="1" fill="#000"/><rect x="4" y="7" width="1" height="1" fill="#000"/><rect x="4" y="9" width="1" height="1" fill="#000"/><rect x="4" y="11" width="1" height="1" fill="#000"/><rect x="4" y="13" width="1" height="1" fill="#000"/><rect x="6" y="9" width="1" height="1" fill="#000"/><rect x="6" y="13" width="1" height="1" fill="#000"/><rect x="8" y="8" width="6" height="2" fill="#000080"/><rect x="8" y="12" width="6" height="2" fill="#000080"/></svg>
<svg style="left:346px;top:59px" width="16" height="15" viewBox="0 0 16 15" shape-rendering="crispEdges"><rect x="6" y="0" width="2" height="1" fill="#808000"/><rect x="8" y="0" width="1" height="1" fill="#000"/><rect x="3" y="1" width="1" height="1" fill="#808000"/><rect x="4" y="1" width="1" height="1" fill="#000"/><rect x="6" y="1" width="2" height="1" fill="#808000"/><rect x="8" y="1" width="1" height="1" fill="#000"/><rect x="10" y="1" width="2" height="1" fill="#808000"/><rect x="2" y="2" width="10" height="1" fill="#808000"/><rect x="12" y="2" width="1" height="1" fill="#000"/><rect x="3" y="3" width="9" height="1" fill="#808000"/><rect x="12" y="3" width="1" height="1" fill="#000"/><rect x="3" y="4" width="3" height="1" fill="#808000"/><rect x="6" y="4" width="3" height="1" fill="#000"/><rect x="9" y="4" width="2" height="1" fill="#808000"/><rect x="11" y="4" width="1" height="1" fill="#000"/><rect x="1" y="5" width="4" height="1" fill="#808000"/><rect x="5" y="5" width="1" height="1" fill="#000"/><rect x="9" y="5" width="1" height="1" fill="#000"/><rect x="10" y="5" width="3" height="1" fill="#808000"/><rect x="13" y="5" width="1" height="1" fill="#000"/><rect x="1" y="6" width="5" height="1" fill="#000"/><rect x="9" y="6" width="5" height="1" fill="#000"/><rect x="4" y="7" width="1" height="1" fill="#000"/><rect x="4" y="9" width="1" height="1" fill="#000"/><rect x="4" y="11" width="1" height="1" fill="#000"/><rect x="4" y="13" width="1" height="1" fill="#000"/><rect x="6" y="9" width="1" height="1" fill="#000"/><rect x="6" y="13" width="1" height="1" fill="#000"/><rect x="8" y="8" width="6" height="2" fill="#000080"/><rect x="8" y="12" width="6" height="2" fill="#000080"/></svg>
<svg style="left:373px;top:59px" width="16" height="15" viewBox="0 0 16 15" shape-rendering="crispEdges"><rect x="3" y="0" width="2" height="1" fill="#0000ff"/><rect x="5" y="0" width="1" height="1" fill="#000"/><rect x="7" y="0" width="2" height="1" fill="#0000ff"/><rect x="9" y="0" width="1" height="1" fill="#000"/><rect x="3" y="1" width="6" height="1" fill="#0000ff"/><rect x="9" y="1" width="1" height="1" fill="#000"/><rect x="4" y="2" width="4" height="1" fill="#0000ff"/><rect x="8" y="2" width="1" height="1" fill="#000"/><rect x="4" y="3" width="4" height="1" fill="#0000ff"/><rect x="8" y="3" width="1" height="1" fill="#000"/><rect x="1" y="4" width="11" height="1" fill="#0000ff"/><rect x="12" y="4" width="1" height="1" fill="#000"/><rect x="1" y="5" width="11" height="1" fill="#0000ff"/><rect x="12" y="5" width="1" height="1" fill="#000"/><rect x="1" y="6" width="12" height="1" fill="#000"/><rect x="4" y="7" width="1" height="1" fill="#000"/><rect x="4" y="9" width="1" height="1" fill="#000"/><rect x="4" y="11" width="1" height="1" fill="#000"/><rect x="4" y="13" width="1" height="1" fill="#000"/><rect x="6" y="9" width="1" height="1" fill="#000"/><rect x="6" y="13" width="1" height="1" fill="#000"/><rect x="8" y="8" width="6" height="2" fill="#000080"/><rect x="8" y="12" width="6" height="2" fill="#000080"/></svg>
<svg style="left:399px;top:58px" width="16" height="15" viewBox="0 0 16 15" shape-rendering="crispEdges"><rect x="3" y="0" width="3" height="1" fill="#000"/><rect x="9" y="0" width="3" height="1" fill="#000"/><rect x="2" y="1" width="5" height="1" fill="#000"/><rect x="8" y="1" width="5" height="1" fill="#000"/><rect x="1" y="2" width="2" height="1" fill="#000"/><rect x="3" y="2" width="1" height="1" fill="#fff"/><rect x="4" y="2" width="6" height="1" fill="#000"/><rect x="10" y="2" width="1" height="1" fill="#fff"/><rect x="11" y="2" width="3" height="1" fill="#000"/><rect x="0" y="3" width="3" height="1" fill="#000"/><rect x="3" y="3" width="1" height="1" fill="#fff"/><rect x="4" y="3" width="2" height="1" fill="#000"/><rect x="6" y="3" width="1" height="1" fill="#fff"/><rect x="7" y="3" width="3" height="1" fill="#000"/><rect x="10" y="3" width="1" height="1" fill="#fff"/><rect x="11" y="3" width="4" height="1" fill="#000"/><rect x="0" y="4" width="3" height="1" fill="#000"/><rect x="3" y="4" width="1" height="1" fill="#fff"/><rect x="4" y="4" width="2" height="1" fill="#000"/><rect x="6" y="4" width="1" height="1" fill="#fff"/><rect x="7" y="4" width="3" height="1" fill="#000"/><rect x="10" y="4" width="1" height="1" fill="#fff"/><rect x="11" y="4" width="4" height="1" fill="#000"/><rect x="0" y="5" width="15" height="1" fill="#000"/><rect x="0" y="6" width="6" height="1" fill="#000"/><rect x="9" y="6" width="6" height="1" fill="#000"/><rect x="4" y="7" width="1" height="1" fill="#000"/><rect x="4" y="9" width="1" height="1" fill="#000"/><rect x="4" y="11" width="1" height="1" fill="#000"/><rect x="4" y="13" width="1" height="1" fill="#000"/><rect x="6" y="9" width="1" height="1" fill="#000"/><rect x="6" y="13" width="1" height="1" fill="#000"/><rect x="8" y="8" width="6" height="2" fill="#000080"/><rect x="8" y="12" width="6" height="2" fill="#000080"/></svg>
<div class="a" style="left:425px;top:57px;width:1px;height:18px;background:#a0a0a0;"></div>
<div class="a" style="left:429px;top:55px;width:124px;height:21px;background:#e1e1e1;box-sizing:border-box;border:1px solid #adadad;"></div><div class="a" style="left:433px;top:56px;width:102px;height:19px;overflow:hidden"><span class="t s" id="t3" style="left:-0.5px;top:4.5px;font-size:11.5px;color:#000;transform:scaleX(0.9065);">Syntaxe Crystal</span></div><svg style="left:540px;top:63px" width="9" height="6" viewBox="0 0 9 6" shape-rendering="crispEdges"><path d="M0.5 0.8 L4.5 4.8 L8.5 0.8" fill="none" stroke="#404040" stroke-width="1.1" shape-rendering="auto"/></svg>
<div class="a" style="left:555px;top:57px;width:1px;height:18px;background:#a0a0a0;"></div>
<div class="a" style="left:559px;top:55px;width:160px;height:21px;background:#e1e1e1;box-sizing:border-box;border:1px solid #adadad;"></div><div class="a" style="left:563px;top:56px;width:138px;height:19px;overflow:hidden"><span class="t s" id="t4" style="left:-0.5px;top:4.5px;font-size:11.5px;color:#000;transform:scaleX(0.9395);">Valeurs par défaut pour les valeurs nulles</span></div><svg style="left:706px;top:63px" width="9" height="6" viewBox="0 0 9 6" shape-rendering="crispEdges"><path d="M0.5 0.8 L4.5 4.8 L8.5 0.8" fill="none" stroke="#404040" stroke-width="1.1" shape-rendering="auto"/></svg>
<div class="a" style="left:721px;top:57px;width:1px;height:18px;background:#a0a0a0;"></div>
<span class="t" id="t5" style="left:731px;top:60px;font-size:13px;color:#0000ff;font-weight:bold;font-style:italic;transform:scaleX(1.5205);">//</span>
<div class="a" style="left:2px;top:82px;width:206px;height:436px;background:#f0f0f0;"></div>
<div class="a" style="left:5px;top:97px;width:194px;height:421px;background:#fff;"></div>
<div class="a" style="left:202px;top:82px;width:3px;height:436px;background:#fff;"></div>
<div class="a" style="left:7px;top:86px;width:164px;height:3px;background:#f0f0f0;border-left:1px solid #fff;border-top:1px solid #fff;border-right:1px solid #a0a0a0;border-bottom:1px solid #a0a0a0;box-sizing:border-box;"></div>
<div class="a" style="left:7px;top:90px;width:164px;height:3px;background:#f0f0f0;border-left:1px solid #fff;border-top:1px solid #fff;border-right:1px solid #a0a0a0;border-bottom:1px solid #a0a0a0;box-sizing:border-box;"></div>
<div class="a" style="left:172px;top:83px;width:12px;height:12px;background:#f0f0f0;box-sizing:border-box;border-top:1px solid #fff;border-left:1px solid #fff;border-right:1px solid #696969;border-bottom:1px solid #696969;box-shadow:inset -1px -1px 0 #a0a0a0;"></div>
<svg style="left:175px;top:87px" width="5" height="3" viewBox="0 0 5 3" shape-rendering="crispEdges"><rect x="0" y="0" width="5" height="1" fill="#a0a0a0"/><rect x="1" y="1" width="3" height="1" fill="#a0a0a0"/><rect x="2" y="2" width="1" height="1" fill="#a0a0a0"/></svg>
<div class="a" style="left:186px;top:83px;width:11px;height:12px;background:#f0f0f0;box-sizing:border-box;border-top:1px solid #fff;border-left:1px solid #fff;border-right:1px solid #696969;border-bottom:1px solid #696969;box-shadow:inset -1px -1px 0 #a0a0a0;"></div>
<svg style="left:188px;top:87px" width="6" height="5" viewBox="0 0 6 5" shape-rendering="crispEdges"><rect x="0" y="0" width="2" height="1" fill="#000"/><rect x="4" y="0" width="2" height="1" fill="#000"/><rect x="1" y="1" width="4" height="1" fill="#000"/><rect x="2" y="2" width="2" height="1" fill="#000"/><rect x="1" y="3" width="4" height="1" fill="#000"/><rect x="0" y="4" width="2" height="1" fill="#000"/><rect x="4" y="4" width="2" height="1" fill="#000"/></svg>
<div class="a" style="left:208px;top:81px;width:2px;height:437px;background:#696969;"></div>
<div class="a" style="left:210px;top:83px;width:1112px;height:374px;background:#f0f0f0;"></div>
<div class="a" style="left:210px;top:83px;width:1112px;height:1px;background:#fff;"></div>
<div class="a" style="left:210px;top:84px;width:1px;height:373px;background:#fff;"></div>
<div class="a" style="left:210px;top:457px;width:1112px;height:1px;background:#fff;"></div>
<div class="a" style="left:210px;top:458px;width:1112px;height:3px;background:#f0f0f0;"></div>
<div class="a" style="left:228px;top:87px;width:464px;height:367px;background:#fff;"></div>
<div class="a" style="left:695px;top:84px;width:2px;height:373px;background:#fff;"></div>
<div class="a" style="left:699px;top:84px;width:2px;height:373px;background:#696969;"></div>
<div class="a" style="left:718px;top:87px;width:448px;height:367px;background:#fff;"></div>
<div class="a" style="left:1166px;top:104px;width:15px;height:111px;background:#cdcdcd;"></div>
<svg style="left:1169px;top:92px" width="9" height="7" viewBox="0 0 9 7" shape-rendering="crispEdges"><path d="M1 5.6 L4.5 2 L8 5.6" fill="none" stroke="#606060" stroke-width="1.8" shape-rendering="auto"/></svg>
<svg style="left:1169px;top:443px" width="9" height="7" viewBox="0 0 9 7" shape-rendering="crispEdges"><path d="M1 1.4 L4.5 5 L8 1.4" fill="none" stroke="#606060" stroke-width="1.8" shape-rendering="auto"/></svg>
<div class="a" style="left:1185px;top:84px;width:4px;height:373px;background:#fff;"></div>
<div class="a" style="left:1189px;top:84px;width:2px;height:373px;background:#696969;"></div>
<div class="a" style="left:1208px;top:87px;width:114px;height:367px;background:#fff;"></div>
<div class="a" style="left:215px;top:89px;width:11px;height:11px;background:#f0f0f0;box-sizing:border-box;border-top:1px solid #fff;border-left:1px solid #fff;border-right:1px solid #696969;border-bottom:1px solid #696969;box-shadow:inset -1px -1px 0 #a0a0a0;"></div>
<svg style="left:217px;top:92px" width="6" height="5" viewBox="0 0 6 5" shape-rendering="crispEdges"><rect x="0" y="0" width="2" height="1" fill="#000"/><rect x="4" y="0" width="2" height="1" fill="#000"/><rect x="1" y="1" width="4" height="1" fill="#000"/><rect x="2" y="2" width="2" height="1" fill="#000"/><rect x="1" y="3" width="4" height="1" fill="#000"/><rect x="0" y="4" width="2" height="1" fill="#000"/><rect x="4" y="4" width="2" height="1" fill="#000"/></svg>
<div class="a" style="left:215px;top:101px;width:11px;height:12px;background:#f0f0f0;box-sizing:border-box;border-top:1px solid #fff;border-left:1px solid #fff;border-right:1px solid #696969;border-bottom:1px solid #696969;box-shadow:inset -1px -1px 0 #a0a0a0;"></div>
<svg style="left:218px;top:104px" width="3" height="5" viewBox="0 0 3 5" shape-rendering="crispEdges"><rect x="2" y="0" width="1" height="1" fill="#000"/><rect x="1" y="1" width="2" height="1" fill="#000"/><rect x="0" y="2" width="3" height="1" fill="#000"/><rect x="1" y="3" width="2" height="1" fill="#000"/><rect x="2" y="4" width="1" height="1" fill="#000"/></svg>
<div class="a" style="left:217px;top:115px;width:3px;height:337px;background:#f0f0f0;border-left:1px solid #fff;border-top:1px solid #fff;border-right:1px solid #a0a0a0;border-bottom:1px solid #a0a0a0;box-sizing:border-box;"></div>
<div class="a" style="left:221px;top:115px;width:3px;height:337px;background:#f0f0f0;border-left:1px solid #fff;border-top:1px solid #fff;border-right:1px solid #a0a0a0;border-bottom:1px solid #a0a0a0;box-sizing:border-box;"></div>
<div class="a" style="left:705px;top:89px;width:11px;height:11px;background:#f0f0f0;box-sizing:border-box;border-top:1px solid #fff;border-left:1px solid #fff;border-right:1px solid #696969;border-bottom:1px solid #696969;box-shadow:inset -1px -1px 0 #a0a0a0;"></div>
<svg style="left:707px;top:92px" width="6" height="5" viewBox="0 0 6 5" shape-rendering="crispEdges"><rect x="0" y="0" width="2" height="1" fill="#000"/><rect x="4" y="0" width="2" height="1" fill="#000"/><rect x="1" y="1" width="4" height="1" fill="#000"/><rect x="2" y="2" width="2" height="1" fill="#000"/><rect x="1" y="3" width="4" height="1" fill="#000"/><rect x="0" y="4" width="2" height="1" fill="#000"/><rect x="4" y="4" width="2" height="1" fill="#000"/></svg>
<div class="a" style="left:705px;top:101px;width:11px;height:12px;background:#f0f0f0;box-sizing:border-box;border-top:1px solid #fff;border-left:1px solid #fff;border-right:1px solid #696969;border-bottom:1px solid #696969;box-shadow:inset -1px -1px 0 #a0a0a0;"></div>
<svg style="left:708px;top:104px" width="3" height="5" viewBox="0 0 3 5" shape-rendering="crispEdges"><rect x="2" y="0" width="1" height="1" fill="#000"/><rect x="1" y="1" width="2" height="1" fill="#000"/><rect x="0" y="2" width="3" height="1" fill="#000"/><rect x="1" y="3" width="2" height="1" fill="#000"/><rect x="2" y="4" width="1" height="1" fill="#000"/></svg>
<div class="a" style="left:707px;top:115px;width:3px;height:337px;background:#f0f0f0;border-left:1px solid #fff;border-top:1px solid #fff;border-right:1px solid #a0a0a0;border-bottom:1px solid #a0a0a0;box-sizing:border-box;"></div>
<div class="a" style="left:711px;top:115px;width:3px;height:337px;background:#f0f0f0;border-left:1px solid #fff;border-top:1px solid #fff;border-right:1px solid #a0a0a0;border-bottom:1px solid #a0a0a0;box-sizing:border-box;"></div>
<div class="a" style="left:1195px;top:89px;width:11px;height:11px;background:#f0f0f0;box-sizing:border-box;border-top:1px solid #fff;border-left:1px solid #fff;border-right:1px solid #696969;border-bottom:1px solid #696969;box-shadow:inset -1px -1px 0 #a0a0a0;"></div>
<svg style="left:1197px;top:92px" width="6" height="5" viewBox="0 0 6 5" shape-rendering="crispEdges"><rect x="0" y="0" width="2" height="1" fill="#000"/><rect x="4" y="0" width="2" height="1" fill="#000"/><rect x="1" y="1" width="4" height="1" fill="#000"/><rect x="2" y="2" width="2" height="1" fill="#000"/><rect x="1" y="3" width="4" height="1" fill="#000"/><rect x="0" y="4" width="2" height="1" fill="#000"/><rect x="4" y="4" width="2" height="1" fill="#000"/></svg>
<div class="a" style="left:1195px;top:101px;width:11px;height:12px;background:#f0f0f0;box-sizing:border-box;border-top:1px solid #fff;border-left:1px solid #fff;border-right:1px solid #696969;border-bottom:1px solid #696969;box-shadow:inset -1px -1px 0 #a0a0a0;"></div>
<svg style="left:1198px;top:104px" width="3" height="5" viewBox="0 0 3 5" shape-rendering="crispEdges"><rect x="2" y="0" width="1" height="1" fill="#000"/><rect x="1" y="1" width="2" height="1" fill="#000"/><rect x="0" y="2" width="3" height="1" fill="#000"/><rect x="1" y="3" width="2" height="1" fill="#000"/><rect x="2" y="4" width="1" height="1" fill="#000"/></svg>
<div class="a" style="left:1197px;top:115px;width:3px;height:337px;background:#f0f0f0;border-left:1px solid #fff;border-top:1px solid #fff;border-right:1px solid #a0a0a0;border-bottom:1px solid #a0a0a0;box-sizing:border-box;"></div>
<div class="a" style="left:1201px;top:115px;width:3px;height:337px;background:#f0f0f0;border-left:1px solid #fff;border-top:1px solid #fff;border-right:1px solid #a0a0a0;border-bottom:1px solid #a0a0a0;box-sizing:border-box;"></div>
<div class="a" style="left:210px;top:461px;width:1112px;height:57px;background:#fff;"></div>
<div class="a" style="left:210px;top:461px;width:20px;height:57px;background:#c0c0c0;background-image:conic-gradient(#fff 25%,#c0c0c0 0 50%,#fff 0 75%,#c0c0c0 0);background-size:2px 2px;"></div>
<div class="a mono" style="left:231px;top:463px;font-size:12px;letter-spacing:0.8px;line-height:15px;white-space:pre;"><span style="color:#0000ff">IF</span><span style="color:#0000ff"> </span><span style="color:#0000ff">ISNULL</span><span style="color:#000">({DATA_DIAPASON/ENTETE.jour}) </span><span style="color:#0000ff">THEN</span><span style="color:#000"> "" </span><span style="color:#0000ff">ELSE</span><span style="color:#0000ff"> </span><span style="color:#0000ff">Cstr</span><span style="color:#000">(</span><span style="color:#0000ff">CDate</span><span style="color:#000"> ({DATA_DIAPASON/ENTETE.jour}))</span></div>
<div class="a" style="left:837px;top:462px;width:1px;height:14px;background:#000;"></div>
<div class="a" style="left:448px;top:477px;width:1px;height:14px;background:#ececec;"></div>
<div class="a" style="left:445px;top:476px;width:3px;height:1px;background:#ececec;"></div>
<div class="a" style="left:449px;top:476px;width:3px;height:1px;background:#ececec;"></div>
<div class="a" style="left:445px;top:491px;width:3px;height:1px;background:#ececec;"></div>
<div class="a" style="left:449px;top:491px;width:3px;height:1px;background:#ececec;"></div>
<div class="a" style="left:5px;top:97px;width:194px;height:421px;overflow:hidden">
<svg style="left:22px;top:0px" width="17" height="16" viewBox="0 0 17 16" shape-rendering="crispEdges"><rect x="8" y="0" width="2" height="1" fill="#808000"/><rect x="10" y="0" width="1" height="1" fill="#000"/><rect x="4" y="1" width="2" height="1" fill="#808000"/><rect x="6" y="1" width="1" height="1" fill="#000"/><rect x="8" y="1" width="2" height="1" fill="#808000"/><rect x="10" y="1" width="1" height="1" fill="#000"/><rect x="12" y="1" width="3" height="1" fill="#808000"/><rect x="4" y="2" width="11" height="1" fill="#808000"/><rect x="15" y="2" width="1" height="1" fill="#000"/><rect x="5" y="3" width="9" height="1" fill="#808000"/><rect x="14" y="3" width="1" height="1" fill="#000"/><rect x="6" y="4" width="8" height="1" fill="#808000"/><rect x="6" y="5" width="3" height="1" fill="#808000"/><rect x="9" y="5" width="2" height="1" fill="#fff"/><rect x="11" y="5" width="5" height="1" fill="#808000"/><rect x="16" y="5" width="1" height="1" fill="#000"/><rect x="4" y="6" width="5" height="1" fill="#808000"/><rect x="9" y="6" width="2" height="1" fill="#fff"/><rect x="11" y="6" width="5" height="1" fill="#808000"/><rect x="16" y="6" width="1" height="1" fill="#000"/><rect x="4" y="7" width="12" height="1" fill="#808000"/><rect x="16" y="7" width="1" height="1" fill="#000"/><rect x="4" y="8" width="2" height="1" fill="#000"/><rect x="6" y="8" width="8" height="1" fill="#808000"/><rect x="14" y="8" width="3" height="1" fill="#000"/><rect x="5" y="9" width="10" height="1" fill="#808000"/><rect x="15" y="9" width="1" height="1" fill="#000"/><rect x="5" y="10" width="3" height="1" fill="#808000"/><rect x="8" y="10" width="1" height="1" fill="#000"/><rect x="9" y="10" width="2" height="1" fill="#808000"/><rect x="11" y="10" width="1" height="1" fill="#000"/><rect x="12" y="10" width="3" height="1" fill="#808000"/><rect x="15" y="10" width="1" height="1" fill="#000"/><rect x="6" y="11" width="2" height="1" fill="#000"/><rect x="9" y="11" width="2" height="1" fill="#808000"/><rect x="11" y="11" width="1" height="1" fill="#000"/><rect x="13" y="11" width="2" height="1" fill="#000"/><rect x="9" y="12" width="3" height="1" fill="#000"/><rect x="0" y="5" width="9" height="1" fill="#000"/><rect x="0" y="6" width="1" height="1" fill="#000"/><rect x="1" y="6" width="7" height="1" fill="#fff"/><rect x="8" y="6" width="1" height="1" fill="#000"/><rect x="0" y="7" width="1" height="1" fill="#000"/><rect x="1" y="7" width="3" height="1" fill="#fff"/><rect x="4" y="7" width="1" height="1" fill="#0000ff"/><rect x="5" y="7" width="3" height="1" fill="#fff"/><rect x="8" y="7" width="1" height="1" fill="#000"/><rect x="0" y="8" width="1" height="1" fill="#000"/><rect x="1" y="8" width="1" height="1" fill="#fff"/><rect x="2" y="8" width="1" height="1" fill="#008080"/><rect x="3" y="8" width="1" height="1" fill="#fff"/><rect x="4" y="8" width="1" height="1" fill="#0000ff"/><rect x="5" y="8" width="1" height="1" fill="#fff"/><rect x="6" y="8" width="1" height="1" fill="#808000"/><rect x="7" y="8" width="1" height="1" fill="#fff"/><rect x="8" y="8" width="1" height="1" fill="#000"/><rect x="0" y="9" width="1" height="1" fill="#000"/><rect x="1" y="9" width="1" height="1" fill="#fff"/><rect x="2" y="9" width="1" height="1" fill="#008080"/><rect x="3" y="9" width="1" height="1" fill="#fff"/><rect x="4" y="9" width="1" height="1" fill="#0000ff"/><rect x="5" y="9" width="1" height="1" fill="#fff"/><rect x="6" y="9" width="1" height="1" fill="#808000"/><rect x="7" y="9" width="1" height="1" fill="#fff"/><rect x="8" y="9" width="1" height="1" fill="#000"/><rect x="0" y="10" width="1" height="1" fill="#000"/><rect x="1" y="10" width="7" height="1" fill="#fff"/><rect x="8" y="10" width="1" height="1" fill="#000"/><rect x="0" y="11" width="1" height="1" fill="#000"/><rect x="1" y="11" width="1" height="1" fill="#fff"/><rect x="2" y="11" width="5" height="1" fill="#808080"/><rect x="7" y="11" width="1" height="1" fill="#fff"/><rect x="8" y="11" width="1" height="1" fill="#000"/><rect x="0" y="12" width="1" height="1" fill="#000"/><rect x="1" y="12" width="7" height="1" fill="#fff"/><rect x="8" y="12" width="1" height="1" fill="#000"/><rect x="0" y="13" width="1" height="1" fill="#000"/><rect x="1" y="13" width="1" height="1" fill="#fff"/><rect x="2" y="13" width="5" height="1" fill="#808080"/><rect x="7" y="13" width="1" height="1" fill="#fff"/><rect x="8" y="13" width="1" height="1" fill="#000"/><rect x="0" y="14" width="1" height="1" fill="#000"/><rect x="1" y="14" width="7" height="1" fill="#fff"/><rect x="8" y="14" width="1" height="1" fill="#000"/><rect x="0" y="15" width="9" height="1" fill="#000"/></svg>
<span class="t s" id="t6" style="left:42.5px;top:2.5px;font-size:11.5px;color:#000;transform:scaleX(0.9074);">Fonctions personnalisées du rapport</span>
<svg style="left:7px;top:20px" width="9" height="9" viewBox="0 0 9 9" shape-rendering="crispEdges"><rect x="0.5" y="0.5" width="8" height="8" rx="1.2" fill="#fff" stroke="#949494" stroke-width="1" shape-rendering="auto"/><rect x="1" y="6" width="7" height="2" fill="#ebebeb"/><rect x="1" y="5" width="7" height="1" fill="#f6f6f6"/><rect x="2" y="4" width="5" height="1" fill="#4964b0"/><rect x="4" y="2" width="1" height="5" fill="#223f86"/></svg>
<svg style="left:22px;top:16px" width="17" height="16" viewBox="0 0 17 16" shape-rendering="crispEdges"><rect x="8" y="0" width="2" height="1" fill="#808000"/><rect x="10" y="0" width="1" height="1" fill="#000"/><rect x="4" y="1" width="2" height="1" fill="#808000"/><rect x="6" y="1" width="1" height="1" fill="#000"/><rect x="8" y="1" width="2" height="1" fill="#808000"/><rect x="10" y="1" width="1" height="1" fill="#000"/><rect x="12" y="1" width="3" height="1" fill="#808000"/><rect x="4" y="2" width="11" height="1" fill="#808000"/><rect x="15" y="2" width="1" height="1" fill="#000"/><rect x="5" y="3" width="9" height="1" fill="#808000"/><rect x="14" y="3" width="1" height="1" fill="#000"/><rect x="6" y="4" width="8" height="1" fill="#808000"/><rect x="6" y="5" width="3" height="1" fill="#808000"/><rect x="9" y="5" width="2" height="1" fill="#fff"/><rect x="11" y="5" width="5" height="1" fill="#808000"/><rect x="16" y="5" width="1" height="1" fill="#000"/><rect x="4" y="6" width="5" height="1" fill="#808000"/><rect x="9" y="6" width="2" height="1" fill="#fff"/><rect x="11" y="6" width="5" height="1" fill="#808000"/><rect x="16" y="6" width="1" height="1" fill="#000"/><rect x="4" y="7" width="12" height="1" fill="#808000"/><rect x="16" y="7" width="1" height="1" fill="#000"/><rect x="4" y="8" width="2" height="1" fill="#000"/><rect x="6" y="8" width="8" height="1" fill="#808000"/><rect x="14" y="8" width="3" height="1" fill="#000"/><rect x="5" y="9" width="10" height="1" fill="#808000"/><rect x="15" y="9" width="1" height="1" fill="#000"/><rect x="5" y="10" width="3" height="1" fill="#808000"/><rect x="8" y="10" width="1" height="1" fill="#000"/><rect x="9" y="10" width="2" height="1" fill="#808000"/><rect x="11" y="10" width="1" height="1" fill="#000"/><rect x="12" y="10" width="3" height="1" fill="#808000"/><rect x="15" y="10" width="1" height="1" fill="#000"/><rect x="6" y="11" width="2" height="1" fill="#000"/><rect x="9" y="11" width="2" height="1" fill="#808000"/><rect x="11" y="11" width="1" height="1" fill="#000"/><rect x="13" y="11" width="2" height="1" fill="#000"/><rect x="9" y="12" width="3" height="1" fill="#000"/><rect x="0" y="4" width="8" height="1" fill="#000"/><rect x="0" y="5" width="1" height="1" fill="#000"/><rect x="1" y="5" width="1" height="1" fill="#707070"/><rect x="2" y="5" width="5" height="1" fill="#fff"/><rect x="7" y="5" width="1" height="1" fill="#000"/><rect x="0" y="6" width="1" height="1" fill="#000"/><rect x="1" y="6" width="1" height="1" fill="#707070"/><rect x="2" y="6" width="5" height="1" fill="#fff"/><rect x="7" y="6" width="1" height="1" fill="#000"/><rect x="0" y="7" width="1" height="1" fill="#000"/><rect x="1" y="7" width="1" height="1" fill="#707070"/><rect x="2" y="7" width="5" height="1" fill="#d0d0d0"/><rect x="7" y="7" width="1" height="1" fill="#000"/><rect x="0" y="8" width="1" height="1" fill="#000"/><rect x="1" y="8" width="1" height="1" fill="#707070"/><rect x="2" y="8" width="5" height="1" fill="#d0d0d0"/><rect x="7" y="8" width="1" height="1" fill="#000"/><rect x="0" y="9" width="1" height="1" fill="#000"/><rect x="1" y="9" width="1" height="1" fill="#707070"/><rect x="2" y="9" width="3" height="1" fill="#a8c8c8"/><rect x="5" y="9" width="1" height="1" fill="#ff0000"/><rect x="6" y="9" width="1" height="1" fill="#a8c8c8"/><rect x="7" y="9" width="1" height="1" fill="#000"/><rect x="0" y="10" width="1" height="1" fill="#000"/><rect x="1" y="10" width="1" height="1" fill="#707070"/><rect x="2" y="10" width="5" height="1" fill="#d0d0d0"/><rect x="7" y="10" width="1" height="1" fill="#000"/><rect x="0" y="11" width="1" height="1" fill="#000"/><rect x="1" y="11" width="1" height="1" fill="#707070"/><rect x="2" y="11" width="5" height="1" fill="#b4b4b4"/><rect x="7" y="11" width="1" height="1" fill="#000"/><rect x="0" y="12" width="1" height="1" fill="#000"/><rect x="1" y="12" width="1" height="1" fill="#707070"/><rect x="2" y="12" width="5" height="1" fill="#b4b4b4"/><rect x="7" y="12" width="1" height="1" fill="#000"/><rect x="0" y="13" width="1" height="1" fill="#000"/><rect x="1" y="13" width="1" height="1" fill="#707070"/><rect x="2" y="13" width="5" height="1" fill="#b4b4b4"/><rect x="7" y="13" width="1" height="1" fill="#000"/><rect x="1" y="14" width="1" height="1" fill="#000"/><rect x="2" y="14" width="1" height="1" fill="#707070"/><rect x="3" y="14" width="4" height="1" fill="#b4b4b4"/><rect x="7" y="14" width="1" height="1" fill="#000"/><rect x="2" y="15" width="6" height="1" fill="#000"/></svg>
<span class="t s" id="t7" style="left:42.5px;top:18.5px;font-size:11.5px;color:#000;transform:scaleX(0.9042);">Fonctions personnalisées du référentiel</span>
<svg style="left:7px;top:36px" width="9" height="9" viewBox="0 0 9 9" shape-rendering="crispEdges"><rect x="0.5" y="0.5" width="8" height="8" rx="1.2" fill="#fff" stroke="#949494" stroke-width="1" shape-rendering="auto"/><rect x="1" y="6" width="7" height="2" fill="#ebebeb"/><rect x="1" y="5" width="7" height="1" fill="#f6f6f6"/><rect x="2" y="4" width="5" height="1" fill="#4964b0"/></svg>
<svg style="left:22px;top:32px" width="16" height="16" viewBox="0 0 16 16" shape-rendering="crispEdges"><rect x="2" y="1" width="4" height="1" fill="#808080"/><rect x="1" y="2" width="1" height="1" fill="#808080"/><rect x="2" y="2" width="4" height="1" fill="#ffffe8"/><rect x="6" y="2" width="1" height="1" fill="#808080"/><rect x="0" y="3" width="1" height="1" fill="#808080"/><rect x="1" y="3" width="2" height="1" fill="#ffffe8"/><rect x="3" y="3" width="4" height="1" fill="url(#dy)"/><rect x="7" y="3" width="7" height="1" fill="#808080"/><rect x="0" y="4" width="1" height="1" fill="#808080"/><rect x="1" y="4" width="12" height="1" fill="#ffffe8"/><rect x="13" y="4" width="1" height="1" fill="#808080"/><rect x="14" y="4" width="1" height="1" fill="#000"/><rect x="0" y="5" width="1" height="1" fill="#808080"/><rect x="1" y="5" width="12" height="1" fill="url(#dy)"/><rect x="13" y="5" width="1" height="1" fill="#808080"/><rect x="14" y="5" width="1" height="1" fill="#000"/><rect x="0" y="6" width="1" height="1" fill="#808080"/><rect x="1" y="6" width="12" height="1" fill="url(#dy)"/><rect x="13" y="6" width="1" height="1" fill="#808080"/><rect x="14" y="6" width="1" height="1" fill="#000"/><rect x="0" y="7" width="1" height="1" fill="#808080"/><rect x="1" y="7" width="12" height="1" fill="url(#dy)"/><rect x="13" y="7" width="1" height="1" fill="#808080"/><rect x="14" y="7" width="1" height="1" fill="#000"/><rect x="0" y="8" width="1" height="1" fill="#808080"/><rect x="1" y="8" width="12" height="1" fill="url(#dy)"/><rect x="13" y="8" width="1" height="1" fill="#808080"/><rect x="14" y="8" width="1" height="1" fill="#000"/><rect x="0" y="9" width="1" height="1" fill="#808080"/><rect x="1" y="9" width="12" height="1" fill="url(#dy)"/><rect x="13" y="9" width="1" height="1" fill="#808080"/><rect x="14" y="9" width="1" height="1" fill="#000"/><rect x="0" y="10" width="1" height="1" fill="#808080"/><rect x="1" y="10" width="12" height="1" fill="url(#dy)"/><rect x="13" y="10" width="1" height="1" fill="#808080"/><rect x="14" y="10" width="1" height="1" fill="#000"/><rect x="0" y="11" width="1" height="1" fill="#808080"/><rect x="1" y="11" width="12" height="1" fill="url(#dy)"/><rect x="13" y="11" width="1" height="1" fill="#808080"/><rect x="14" y="11" width="1" height="1" fill="#000"/><rect x="0" y="12" width="14" height="1" fill="#808080"/><rect x="14" y="12" width="1" height="1" fill="#000"/><rect x="1" y="13" width="14" height="1" fill="#000"/></svg>
<span class="t s" id="t8" style="left:42px;top:34.5px;font-size:11.5px;color:#000;transform:scaleX(0.9217);">Champs de formule</span>
<svg style="left:41px;top:48px" width="18" height="18" viewBox="0 0 18 18" shape-rendering="crispEdges"><text x="-0.2" y="10" font-size="9.8" font-family="Liberation Sans,sans-serif" font-weight="bold" fill="#000080" stroke="#000080" stroke-width="0.45" shape-rendering="auto" textLength="7" lengthAdjust="spacingAndGlyphs">X</text><text x="6.8" y="8.7" font-size="6.4" font-family="Liberation Sans,sans-serif" font-weight="bold" fill="#000080" stroke="#000080" stroke-width="0.45" shape-rendering="auto">+</text><text x="9.2" y="10" font-size="11.6" font-family="Liberation Sans,sans-serif" font-weight="bold" fill="#000080" stroke="#000080" stroke-width="0.45" shape-rendering="auto" textLength="5.2" lengthAdjust="spacingAndGlyphs">1</text><rect x="0" y="12" width="5" height="1" fill="#000080"/><path d="M6.6 12.9 L9.4 15.2 L14.5 8.7" fill="none" stroke="#ffff00" stroke-width="3.3" stroke-linecap="square" shape-rendering="auto"/><path d="M6.6 12.9 L9.4 15.2 L14.5 8.7" fill="none" stroke="#008000" stroke-width="1.7" stroke-linecap="square" shape-rendering="auto"/></svg>
<span class="t s" id="t9" style="left:60.599999999999994px;top:50.5px;font-size:11.5px;color:#000;transform:scaleX(1.0176);">code128</span>
<svg style="left:41px;top:64px" width="18" height="18" viewBox="0 0 18 18" shape-rendering="crispEdges"><text x="-0.2" y="10" font-size="9.8" font-family="Liberation Sans,sans-serif" font-weight="bold" fill="#000080" stroke="#000080" stroke-width="0.45" shape-rendering="auto" textLength="7" lengthAdjust="spacingAndGlyphs">X</text><text x="6.8" y="8.7" font-size="6.4" font-family="Liberation Sans,sans-serif" font-weight="bold" fill="#000080" stroke="#000080" stroke-width="0.45" shape-rendering="auto">+</text><text x="9.2" y="10" font-size="11.6" font-family="Liberation Sans,sans-serif" font-weight="bold" fill="#000080" stroke="#000080" stroke-width="0.45" shape-rendering="auto" textLength="5.2" lengthAdjust="spacingAndGlyphs">1</text><rect x="0" y="12" width="5" height="1" fill="#000080"/><path d="M6.6 12.9 L9.4 15.2 L14.5 8.7" fill="none" stroke="#ffff00" stroke-width="3.3" stroke-linecap="square" shape-rendering="auto"/><path d="M6.6 12.9 L9.4 15.2 L14.5 8.7" fill="none" stroke="#008000" stroke-width="1.7" stroke-linecap="square" shape-rendering="auto"/></svg>
<span class="t s" id="t10" style="left:60.599999999999994px;top:66.5px;font-size:11.5px;color:#000;transform:scaleX(0.9892);">html</span>
<svg style="left:41px;top:80px" width="18" height="18" viewBox="0 0 18 18" shape-rendering="crispEdges"><text x="-0.2" y="10" font-size="9.8" font-family="Liberation Sans,sans-serif" font-weight="bold" fill="#000080" stroke="#000080" stroke-width="0.45" shape-rendering="auto" textLength="7" lengthAdjust="spacingAndGlyphs">X</text><text x="6.8" y="8.7" font-size="6.4" font-family="Liberation Sans,sans-serif" font-weight="bold" fill="#000080" stroke="#000080" stroke-width="0.45" shape-rendering="auto">+</text><text x="9.2" y="10" font-size="11.6" font-family="Liberation Sans,sans-serif" font-weight="bold" fill="#000080" stroke="#000080" stroke-width="0.45" shape-rendering="auto" textLength="5.2" lengthAdjust="spacingAndGlyphs">1</text><rect x="0" y="12" width="5" height="1" fill="#000080"/></svg>
<div class="a" style="left:60px;top:80px;width:42px;height:16px;background:#f0f0f0;"></div><span class="t s" id="t11" style="left:62px;top:82.5px;font-size:11.5px;color:#000;transform:scaleX(0.9558);">MaDate</span>
<svg style="left:7px;top:100px" width="9" height="9" viewBox="0 0 9 9" shape-rendering="crispEdges"><rect x="0.5" y="0.5" width="8" height="8" rx="1.2" fill="#fff" stroke="#949494" stroke-width="1" shape-rendering="auto"/><rect x="1" y="6" width="7" height="2" fill="#ebebeb"/><rect x="1" y="5" width="7" height="1" fill="#f6f6f6"/><rect x="2" y="4" width="5" height="1" fill="#4964b0"/><rect x="4" y="2" width="1" height="5" fill="#223f86"/></svg>
<svg style="left:22px;top:96px" width="16" height="16" viewBox="0 0 16 16" shape-rendering="crispEdges"><rect x="2" y="1" width="4" height="1" fill="#808080"/><rect x="1" y="2" width="1" height="1" fill="#808080"/><rect x="2" y="2" width="4" height="1" fill="#ffffe8"/><rect x="6" y="2" width="1" height="1" fill="#808080"/><rect x="0" y="3" width="1" height="1" fill="#808080"/><rect x="1" y="3" width="2" height="1" fill="#ffffe8"/><rect x="3" y="3" width="4" height="1" fill="url(#dy)"/><rect x="7" y="3" width="7" height="1" fill="#808080"/><rect x="0" y="4" width="1" height="1" fill="#808080"/><rect x="1" y="4" width="12" height="1" fill="#ffffe8"/><rect x="13" y="4" width="1" height="1" fill="#808080"/><rect x="14" y="4" width="1" height="1" fill="#000"/><rect x="0" y="5" width="1" height="1" fill="#808080"/><rect x="1" y="5" width="12" height="1" fill="url(#dy)"/><rect x="13" y="5" width="1" height="1" fill="#808080"/><rect x="14" y="5" width="1" height="1" fill="#000"/><rect x="0" y="6" width="1" height="1" fill="#808080"/><rect x="1" y="6" width="12" height="1" fill="url(#dy)"/><rect x="13" y="6" width="1" height="1" fill="#808080"/><rect x="14" y="6" width="1" height="1" fill="#000"/><rect x="0" y="7" width="1" height="1" fill="#808080"/><rect x="1" y="7" width="12" height="1" fill="url(#dy)"/><rect x="13" y="7" width="1" height="1" fill="#808080"/><rect x="14" y="7" width="1" height="1" fill="#000"/><rect x="0" y="8" width="1" height="1" fill="#808080"/><rect x="1" y="8" width="12" height="1" fill="url(#dy)"/><rect x="13" y="8" width="1" height="1" fill="#808080"/><rect x="14" y="8" width="1" height="1" fill="#000"/><rect x="0" y="9" width="1" height="1" fill="#808080"/><rect x="1" y="9" width="12" height="1" fill="url(#dy)"/><rect x="13" y="9" width="1" height="1" fill="#808080"/><rect x="14" y="9" width="1" height="1" fill="#000"/><rect x="0" y="10" width="1" height="1" fill="#808080"/><rect x="1" y="10" width="12" height="1" fill="url(#dy)"/><rect x="13" y="10" width="1" height="1" fill="#808080"/><rect x="14" y="10" width="1" height="1" fill="#000"/><rect x="0" y="11" width="1" height="1" fill="#808080"/><rect x="1" y="11" width="12" height="1" fill="url(#dy)"/><rect x="13" y="11" width="1" height="1" fill="#808080"/><rect x="14" y="11" width="1" height="1" fill="#000"/><rect x="0" y="12" width="14" height="1" fill="#808080"/><rect x="14" y="12" width="1" height="1" fill="#000"/><rect x="1" y="13" width="14" height="1" fill="#000"/></svg>
<span class="t s" id="t12" style="left:42px;top:98.5px;font-size:11.5px;color:#000;transform:scaleX(0.9200);">Formules de sélection</span>
<svg style="left:7px;top:116px" width="9" height="9" viewBox="0 0 9 9" shape-rendering="crispEdges"><rect x="0.5" y="0.5" width="8" height="8" rx="1.2" fill="#fff" stroke="#949494" stroke-width="1" shape-rendering="auto"/><rect x="1" y="6" width="7" height="2" fill="#ebebeb"/><rect x="1" y="5" width="7" height="1" fill="#f6f6f6"/><rect x="2" y="4" width="5" height="1" fill="#4964b0"/><rect x="4" y="2" width="1" height="5" fill="#223f86"/></svg>
<svg style="left:22px;top:112px" width="16" height="16" viewBox="0 0 16 16" shape-rendering="crispEdges"><rect x="2" y="1" width="4" height="1" fill="#808080"/><rect x="1" y="2" width="1" height="1" fill="#808080"/><rect x="2" y="2" width="4" height="1" fill="#ffffe8"/><rect x="6" y="2" width="1" height="1" fill="#808080"/><rect x="0" y="3" width="1" height="1" fill="#808080"/><rect x="1" y="3" width="2" height="1" fill="#ffffe8"/><rect x="3" y="3" width="4" height="1" fill="url(#dy)"/><rect x="7" y="3" width="7" height="1" fill="#808080"/><rect x="0" y="4" width="1" height="1" fill="#808080"/><rect x="1" y="4" width="12" height="1" fill="#ffffe8"/><rect x="13" y="4" width="1" height="1" fill="#808080"/><rect x="14" y="4" width="1" height="1" fill="#000"/><rect x="0" y="5" width="1" height="1" fill="#808080"/><rect x="1" y="5" width="12" height="1" fill="url(#dy)"/><rect x="13" y="5" width="1" height="1" fill="#808080"/><rect x="14" y="5" width="1" height="1" fill="#000"/><rect x="0" y="6" width="1" height="1" fill="#808080"/><rect x="1" y="6" width="12" height="1" fill="url(#dy)"/><rect x="13" y="6" width="1" height="1" fill="#808080"/><rect x="14" y="6" width="1" height="1" fill="#000"/><rect x="0" y="7" width="1" height="1" fill="#808080"/><rect x="1" y="7" width="12" height="1" fill="url(#dy)"/><rect x="13" y="7" width="1" height="1" fill="#808080"/><rect x="14" y="7" width="1" height="1" fill="#000"/><rect x="0" y="8" width="1" height="1" fill="#808080"/><rect x="1" y="8" width="12" height="1" fill="url(#dy)"/><rect x="13" y="8" width="1" height="1" fill="#808080"/><rect x="14" y="8" width="1" height="1" fill="#000"/><rect x="0" y="9" width="1" height="1" fill="#808080"/><rect x="1" y="9" width="12" height="1" fill="url(#dy)"/><rect x="13" y="9" width="1" height="1" fill="#808080"/><rect x="14" y="9" width="1" height="1" fill="#000"/><rect x="0" y="10" width="1" height="1" fill="#808080"/><rect x="1" y="10" width="12" height="1" fill="url(#dy)"/><rect x="13" y="10" width="1" height="1" fill="#808080"/><rect x="14" y="10" width="1" height="1" fill="#000"/><rect x="0" y="11" width="1" height="1" fill="#808080"/><rect x="1" y="11" width="12" height="1" fill="url(#dy)"/><rect x="13" y="11" width="1" height="1" fill="#808080"/><rect x="14" y="11" width="1" height="1" fill="#000"/><rect x="0" y="12" width="14" height="1" fill="#808080"/><rect x="14" y="12" width="1" height="1" fill="#000"/><rect x="1" y="13" width="14" height="1" fill="#000"/></svg>
<span class="t s" id="t13" style="left:42px;top:114.5px;font-size:11.5px;color:#000;transform:scaleX(0.9038);">Formules de mise en forme</span>
</div>
<svg style="left:235px;top:91px" width="9" height="9" viewBox="0 0 9 9" shape-rendering="crispEdges"><rect x="0.5" y="0.5" width="8" height="8" rx="1.2" fill="#fff" stroke="#949494" stroke-width="1" shape-rendering="auto"/><rect x="1" y="6" width="7" height="2" fill="#ebebeb"/><rect x="1" y="5" width="7" height="1" fill="#f6f6f6"/><rect x="2" y="4" width="5" height="1" fill="#4964b0"/><rect x="4" y="2" width="1" height="5" fill="#223f86"/></svg>
<svg style="left:250px;top:87px" width="16" height="16" viewBox="0 0 16 16" shape-rendering="crispEdges"><rect x="3" y="1" width="7" height="1" fill="#5b7fe0"/><rect x="3" y="2" width="1" height="1" fill="#5b7fe0"/><rect x="4" y="2" width="5" height="1" fill="#fff"/><rect x="9" y="2" width="2" height="1" fill="#5b7fe0"/><rect x="3" y="3" width="1" height="1" fill="#5b7fe0"/><rect x="4" y="3" width="2" height="1" fill="#fff"/><rect x="6" y="3" width="2" height="1" fill="#e02020"/><rect x="8" y="3" width="2" height="1" fill="#fff"/><rect x="10" y="3" width="2" height="1" fill="#5b7fe0"/><rect x="3" y="4" width="1" height="1" fill="#5b7fe0"/><rect x="4" y="4" width="1" height="1" fill="#fff"/><rect x="5" y="4" width="1" height="1" fill="#10a020"/><rect x="6" y="4" width="2" height="1" fill="#e02020"/><rect x="8" y="4" width="1" height="1" fill="#1050d0"/><rect x="9" y="4" width="2" height="1" fill="#fff"/><rect x="11" y="4" width="1" height="1" fill="#5b7fe0"/><rect x="3" y="5" width="1" height="1" fill="#5b7fe0"/><rect x="4" y="5" width="1" height="1" fill="#fff"/><rect x="5" y="5" width="2" height="1" fill="#10a020"/><rect x="7" y="5" width="2" height="1" fill="#1050d0"/><rect x="9" y="5" width="2" height="1" fill="#fff"/><rect x="11" y="5" width="1" height="1" fill="#5b7fe0"/><rect x="3" y="6" width="1" height="1" fill="#5b7fe0"/><rect x="4" y="6" width="7" height="1" fill="#fff"/><rect x="11" y="6" width="1" height="1" fill="#5b7fe0"/><rect x="3" y="7" width="1" height="1" fill="#5b7fe0"/><rect x="4" y="7" width="1" height="1" fill="#fff"/><rect x="5" y="7" width="1" height="1" fill="#9ab0c8"/><rect x="6" y="7" width="1" height="1" fill="#fff"/><rect x="7" y="7" width="1" height="1" fill="#9ab0c8"/><rect x="8" y="7" width="1" height="1" fill="#fff"/><rect x="9" y="7" width="1" height="1" fill="#9ab0c8"/><rect x="10" y="7" width="1" height="1" fill="#fff"/><rect x="11" y="7" width="1" height="1" fill="#5b7fe0"/><rect x="3" y="8" width="9" height="1" fill="#5b7fe0"/><rect x="2" y="10" width="12" height="1" fill="#5b7fe0"/><rect x="1" y="11" width="1" height="1" fill="#5b7fe0"/><rect x="2" y="11" width="1" height="1" fill="#fff"/><rect x="3" y="11" width="1" height="1" fill="#5b7fe0"/><rect x="4" y="11" width="10" height="1" fill="#fff"/><rect x="14" y="11" width="1" height="1" fill="#5b7fe0"/><rect x="1" y="12" width="1" height="1" fill="#5b7fe0"/><rect x="2" y="12" width="1" height="1" fill="#fff"/><rect x="3" y="12" width="1" height="1" fill="#5b7fe0"/><rect x="4" y="12" width="2" height="1" fill="#fff"/><rect x="6" y="12" width="6" height="1" fill="#5b7fe0"/><rect x="12" y="12" width="2" height="1" fill="#fff"/><rect x="14" y="12" width="1" height="1" fill="#5b7fe0"/><rect x="2" y="13" width="12" height="1" fill="#5b7fe0"/></svg>
<span class="t s" id="t14" style="left:270px;top:89.5px;font-size:11.5px;color:#000;transform:scaleX(0.9192);">Champs du rapport</span>
<svg style="left:235px;top:107px" width="9" height="9" viewBox="0 0 9 9" shape-rendering="crispEdges"><rect x="0.5" y="0.5" width="8" height="8" rx="1.2" fill="#fff" stroke="#949494" stroke-width="1" shape-rendering="auto"/><rect x="1" y="6" width="7" height="2" fill="#ebebeb"/><rect x="1" y="5" width="7" height="1" fill="#f6f6f6"/><rect x="2" y="4" width="5" height="1" fill="#4964b0"/><rect x="4" y="2" width="1" height="5" fill="#223f86"/></svg>
<svg style="left:250px;top:103px" width="16" height="16" viewBox="0 0 16 16" shape-rendering="crispEdges"><defs><linearGradient id="g250_103" x1="0" x2="1" y1="0" y2="0"><stop offset="0" stop-color="#c98e00"/><stop offset="0.3" stop-color="#fff3a6"/><stop offset="0.55" stop-color="#f5c822"/><stop offset="1" stop-color="#c99400"/></linearGradient></defs><path d="M3 3.5 Q3 2 7.5 2 Q12 2 12 3.5 V12.5 Q12 14 7.5 14 Q3 14 3 12.5 Z" fill="url(#g250_103)" stroke="#b98500" stroke-width="0.7" shape-rendering="auto"/><ellipse cx="7.5" cy="3.6" rx="4" ry="1.4" fill="#ffe680" stroke="#d8a000" stroke-width="0.6" shape-rendering="auto"/></svg>
<span class="t s" id="t15" style="left:270px;top:105.5px;font-size:11.5px;color:#000;transform:scaleX(0.9167);">ISImpCrystal_CTX_DIAPASON.xml ISImpCrystal.xsd (XML et Services Web)</span>
<svg style="left:235px;top:123px" width="9" height="9" viewBox="0 0 9 9" shape-rendering="crispEdges"><rect x="0.5" y="0.5" width="8" height="8" rx="1.2" fill="#fff" stroke="#949494" stroke-width="1" shape-rendering="auto"/><rect x="1" y="6" width="7" height="2" fill="#ebebeb"/><rect x="1" y="5" width="7" height="1" fill="#f6f6f6"/><rect x="2" y="4" width="5" height="1" fill="#4964b0"/></svg>
<svg style="left:250px;top:119px" width="16" height="16" viewBox="0 0 16 16" shape-rendering="crispEdges"><defs><linearGradient id="g250_119" x1="0" x2="1" y1="0" y2="0"><stop offset="0" stop-color="#c98e00"/><stop offset="0.3" stop-color="#fff3a6"/><stop offset="0.55" stop-color="#f5c822"/><stop offset="1" stop-color="#c99400"/></linearGradient></defs><path d="M3 3.5 Q3 2 7.5 2 Q12 2 12 3.5 V12.5 Q12 14 7.5 14 Q3 14 3 12.5 Z" fill="url(#g250_119)" stroke="#b98500" stroke-width="0.7" shape-rendering="auto"/><ellipse cx="7.5" cy="3.6" rx="4" ry="1.4" fill="#ffe680" stroke="#d8a000" stroke-width="0.6" shape-rendering="auto"/></svg>
<span class="t s" id="t16" style="left:270px;top:121.5px;font-size:11.5px;color:#000;transform:scaleX(0.9183);">ISImpCrystal_ENTETE.xml ISImpCrystal.xsd (XML et Services Web)</span>
<svg style="left:254px;top:139px" width="9" height="9" viewBox="0 0 9 9" shape-rendering="crispEdges"><rect x="0.5" y="0.5" width="8" height="8" rx="1.2" fill="#fff" stroke="#949494" stroke-width="1" shape-rendering="auto"/><rect x="1" y="6" width="7" height="2" fill="#ebebeb"/><rect x="1" y="5" width="7" height="1" fill="#f6f6f6"/><rect x="2" y="4" width="5" height="1" fill="#4964b0"/></svg>
<svg style="left:270px;top:135px" width="16" height="16" viewBox="0 0 16 16" shape-rendering="crispEdges"><rect x="1" y="2" width="13" height="12" fill="#fff"/><rect x="1" y="2" width="13" height="1" fill="#d87800"/><rect x="1" y="3" width="13" height="1" fill="#ffa818"/><rect x="1" y="4" width="13" height="1" fill="#ffc040"/><rect x="1" y="5" width="13" height="1" fill="#c8a060"/><rect x="1" y="8" width="13" height="1" fill="#c8a060"/><rect x="1" y="11" width="13" height="1" fill="#c8a060"/><rect x="1" y="5" width="1" height="9" fill="#c8a060"/><rect x="5" y="5" width="1" height="9" fill="#c8a060"/><rect x="9" y="5" width="1" height="9" fill="#c8a060"/><rect x="13" y="5" width="1" height="9" fill="#c8a060"/><rect x="1" y="13" width="13" height="1" fill="#a07830"/><rect x="1" y="2" width="1" height="12" fill="#b88838" opacity="0.8"/><rect x="13" y="2" width="1" height="12" fill="#b88838" opacity="0.8"/><rect x="6" y="6" width="3" height="2" fill="#e8ffff"/><rect x="10" y="9" width="3" height="2" fill="#e8ffff"/></svg>
<span class="t s" id="t17" style="left:289px;top:137.5px;font-size:11.5px;color:#000;transform:scaleX(0.9860);">DATA_DIAPASON/ENTETE</span>
<svg style="left:289px;top:151px" width="16" height="16" viewBox="0 0 16 16" shape-rendering="crispEdges"><rect x="1" y="6" width="13" height="5" fill="#c8d0e8" opacity="0.7"/><rect x="0" y="5" width="13" height="5" fill="#5878d8"/><rect x="1" y="6" width="11" height="3" fill="#fff"/><rect x="2" y="7" width="2" height="1" fill="#5878d8"/><rect x="6" y="7" width="5" height="1" fill="#5878d8"/></svg>
<span class="t s" id="t18" style="left:308px;top:153.5px;font-size:11.5px;color:#000;transform:scaleX(0.9619);">codeBarre128</span>
<svg style="left:289px;top:167px" width="16" height="16" viewBox="0 0 16 16" shape-rendering="crispEdges"><rect x="1" y="6" width="13" height="5" fill="#c8d0e8" opacity="0.7"/><rect x="0" y="5" width="13" height="5" fill="#5878d8"/><rect x="1" y="6" width="11" height="3" fill="#fff"/><rect x="2" y="7" width="2" height="1" fill="#5878d8"/><rect x="6" y="7" width="5" height="1" fill="#5878d8"/></svg>
<span class="t s" id="t19" style="left:308px;top:169.5px;font-size:11.5px;color:#000;transform:scaleX(0.9642);">codeBarre39</span>
<svg style="left:289px;top:183px" width="16" height="16" viewBox="0 0 16 16" shape-rendering="crispEdges"><rect x="1" y="6" width="13" height="5" fill="#c8d0e8" opacity="0.7"/><rect x="0" y="5" width="13" height="5" fill="#5878d8"/><rect x="1" y="6" width="11" height="3" fill="#fff"/><rect x="2" y="7" width="2" height="1" fill="#5878d8"/><rect x="6" y="7" width="5" height="1" fill="#5878d8"/></svg>
<span class="t s" id="t20" style="left:308px;top:185.5px;font-size:11.5px;color:#000;transform:scaleX(0.9969);">Img1</span>
<svg style="left:289px;top:199px" width="16" height="16" viewBox="0 0 16 16" shape-rendering="crispEdges"><rect x="1" y="6" width="13" height="5" fill="#c8d0e8" opacity="0.7"/><rect x="0" y="5" width="13" height="5" fill="#5878d8"/><rect x="1" y="6" width="11" height="3" fill="#fff"/><rect x="2" y="7" width="2" height="1" fill="#5878d8"/><rect x="6" y="7" width="5" height="1" fill="#5878d8"/></svg>
<span class="t s" id="t21" style="left:308px;top:201.5px;font-size:11.5px;color:#000;transform:scaleX(0.9969);">Img2</span>
<svg style="left:289px;top:215px" width="16" height="16" viewBox="0 0 16 16" shape-rendering="crispEdges"><rect x="1" y="6" width="13" height="5" fill="#c8d0e8" opacity="0.7"/><rect x="0" y="5" width="13" height="5" fill="#5878d8"/><rect x="1" y="6" width="11" height="3" fill="#fff"/><rect x="2" y="7" width="2" height="1" fill="#5878d8"/><rect x="6" y="7" width="5" height="1" fill="#5878d8"/></svg>
<span class="t s" id="t22" style="left:308px;top:217.5px;font-size:11.5px;color:#000;transform:scaleX(0.9969);">Img3</span>
<svg style="left:289px;top:231px" width="16" height="16" viewBox="0 0 16 16" shape-rendering="crispEdges"><rect x="1" y="6" width="13" height="5" fill="#c8d0e8" opacity="0.7"/><rect x="0" y="5" width="13" height="5" fill="#5878d8"/><rect x="1" y="6" width="11" height="3" fill="#fff"/><rect x="2" y="7" width="2" height="1" fill="#5878d8"/><rect x="6" y="7" width="5" height="1" fill="#5878d8"/></svg>
<span class="t s" id="t23" style="left:308px;top:233.5px;font-size:11.5px;color:#000;transform:scaleX(0.9444);">imp</span>
<svg style="left:289px;top:247px" width="16" height="16" viewBox="0 0 16 16" shape-rendering="crispEdges"><rect x="1" y="6" width="13" height="5" fill="#c8d0e8" opacity="0.7"/><rect x="0" y="5" width="13" height="5" fill="#5878d8"/><rect x="1" y="6" width="11" height="3" fill="#fff"/><rect x="2" y="7" width="2" height="1" fill="#5878d8"/><rect x="6" y="7" width="5" height="1" fill="#5878d8"/></svg>
<div class="a" style="left:307px;top:247px;width:21px;height:16px;background:#f0f0f0;"></div><span class="t s" id="t24" style="left:308px;top:249.5px;font-size:11.5px;color:#000;transform:scaleX(1.0163);">jour</span>
<svg style="left:289px;top:263px" width="16" height="16" viewBox="0 0 16 16" shape-rendering="crispEdges"><rect x="1" y="6" width="13" height="5" fill="#c8d0e8" opacity="0.7"/><rect x="0" y="5" width="13" height="5" fill="#5878d8"/><rect x="1" y="6" width="11" height="3" fill="#fff"/><rect x="2" y="7" width="2" height="1" fill="#5878d8"/><rect x="6" y="7" width="5" height="1" fill="#5878d8"/></svg>
<span class="t s" id="t25" style="left:308px;top:265.5px;font-size:11.5px;color:#000;transform:scaleX(0.9927);">srvedt</span>
<svg style="left:289px;top:279px" width="16" height="16" viewBox="0 0 16 16" shape-rendering="crispEdges"><rect x="1" y="6" width="13" height="5" fill="#c8d0e8" opacity="0.7"/><rect x="0" y="5" width="13" height="5" fill="#5878d8"/><rect x="1" y="6" width="11" height="3" fill="#fff"/><rect x="2" y="7" width="2" height="1" fill="#5878d8"/><rect x="6" y="7" width="5" height="1" fill="#5878d8"/></svg>
<span class="t s" id="t26" style="left:308px;top:281.5px;font-size:11.5px;color:#000;transform:scaleX(0.9686);">Internal_ID</span>
<svg style="left:235px;top:299px" width="9" height="9" viewBox="0 0 9 9" shape-rendering="crispEdges"><rect x="0.5" y="0.5" width="8" height="8" rx="1.2" fill="#fff" stroke="#949494" stroke-width="1" shape-rendering="auto"/><rect x="1" y="6" width="7" height="2" fill="#ebebeb"/><rect x="1" y="5" width="7" height="1" fill="#f6f6f6"/><rect x="2" y="4" width="5" height="1" fill="#4964b0"/><rect x="4" y="2" width="1" height="5" fill="#223f86"/></svg>
<svg style="left:250px;top:295px" width="16" height="16" viewBox="0 0 16 16" shape-rendering="crispEdges"><defs><linearGradient id="g250_295" x1="0" x2="1" y1="0" y2="0"><stop offset="0" stop-color="#c98e00"/><stop offset="0.3" stop-color="#fff3a6"/><stop offset="0.55" stop-color="#f5c822"/><stop offset="1" stop-color="#c99400"/></linearGradient></defs><path d="M3 3.5 Q3 2 7.5 2 Q12 2 12 3.5 V12.5 Q12 14 7.5 14 Q3 14 3 12.5 Z" fill="url(#g250_295)" stroke="#b98500" stroke-width="0.7" shape-rendering="auto"/><ellipse cx="7.5" cy="3.6" rx="4" ry="1.4" fill="#ffe680" stroke="#d8a000" stroke-width="0.6" shape-rendering="auto"/></svg>
<span class="t s" id="t27" style="left:270px;top:297.5px;font-size:11.5px;color:#000;transform:scaleX(0.9167);">ISImpCrystal_LIGNE.xml ISImpCrystal.xsd (XML et Services Web)</span>
<svg style="left:724px;top:91px" width="9" height="9" viewBox="0 0 9 9" shape-rendering="crispEdges"><rect x="0.5" y="0.5" width="8" height="8" rx="1.2" fill="#fff" stroke="#949494" stroke-width="1" shape-rendering="auto"/><rect x="1" y="6" width="7" height="2" fill="#ebebeb"/><rect x="1" y="5" width="7" height="1" fill="#f6f6f6"/><rect x="2" y="4" width="5" height="1" fill="#4964b0"/></svg>
<svg style="left:736px;top:87px" width="17" height="16" viewBox="0 0 17 16" shape-rendering="crispEdges"><rect x="2" y="0" width="5" height="1" fill="#808080"/><rect x="1" y="1" width="1" height="1" fill="#808080"/><rect x="2" y="1" width="5" height="1" fill="url(#dy)"/><rect x="7" y="1" width="1" height="1" fill="#808080"/><rect x="0" y="2" width="1" height="1" fill="#808080"/><rect x="1" y="2" width="6" height="1" fill="url(#dy)"/><rect x="7" y="2" width="7" height="1" fill="#808080"/><rect x="0" y="3" width="1" height="1" fill="#808080"/><rect x="1" y="3" width="12" height="1" fill="url(#dy)"/><rect x="13" y="3" width="1" height="1" fill="#808080"/><rect x="0" y="4" width="1" height="1" fill="#808080"/><rect x="1" y="4" width="12" height="1" fill="url(#dy)"/><rect x="13" y="4" width="1" height="1" fill="#808080"/><rect x="0" y="5" width="1" height="1" fill="#808080"/><rect x="1" y="5" width="12" height="1" fill="url(#dy)"/><rect x="13" y="5" width="1" height="1" fill="#808080"/><rect x="0" y="6" width="1" height="1" fill="#808080"/><rect x="1" y="6" width="12" height="1" fill="url(#dy)"/><rect x="13" y="6" width="1" height="1" fill="#808080"/><rect x="0" y="7" width="1" height="1" fill="#808080"/><rect x="1" y="7" width="12" height="1" fill="url(#dy)"/><rect x="13" y="7" width="1" height="1" fill="#808080"/><rect x="0" y="8" width="1" height="1" fill="#808080"/><rect x="1" y="8" width="12" height="1" fill="url(#dy)"/><rect x="13" y="8" width="1" height="1" fill="#808080"/><rect x="0" y="9" width="1" height="1" fill="#808080"/><rect x="1" y="9" width="12" height="1" fill="url(#dy)"/><rect x="13" y="9" width="1" height="1" fill="#808080"/><rect x="0" y="10" width="1" height="1" fill="#808080"/><rect x="1" y="10" width="12" height="1" fill="url(#dy)"/><rect x="13" y="10" width="1" height="1" fill="#808080"/><rect x="0" y="11" width="14" height="1" fill="#808080"/><rect x="8" y="3" width="2" height="1" fill="#808000"/><rect x="10" y="3" width="1" height="1" fill="#000"/><rect x="5" y="4" width="1" height="1" fill="#808000"/><rect x="6" y="4" width="1" height="1" fill="#000"/><rect x="8" y="4" width="2" height="1" fill="#808000"/><rect x="10" y="4" width="1" height="1" fill="#000"/><rect x="12" y="4" width="2" height="1" fill="#808000"/><rect x="4" y="5" width="10" height="1" fill="#808000"/><rect x="14" y="5" width="1" height="1" fill="#000"/><rect x="5" y="6" width="9" height="1" fill="#808000"/><rect x="14" y="6" width="1" height="1" fill="#000"/><rect x="5" y="7" width="3" height="1" fill="#808000"/><rect x="8" y="7" width="3" height="1" fill="#000"/><rect x="11" y="7" width="2" height="1" fill="#808000"/><rect x="13" y="7" width="1" height="1" fill="#000"/><rect x="3" y="8" width="4" height="1" fill="#808000"/><rect x="7" y="8" width="2" height="1" fill="#000"/><rect x="9" y="8" width="1" height="1" fill="#fff"/><rect x="10" y="8" width="1" height="1" fill="#000"/><rect x="11" y="8" width="4" height="1" fill="#808000"/><rect x="15" y="8" width="1" height="1" fill="#000"/><rect x="3" y="9" width="4" height="1" fill="#808000"/><rect x="7" y="9" width="1" height="1" fill="#000"/><rect x="8" y="9" width="1" height="1" fill="#fff"/><rect x="9" y="9" width="2" height="1" fill="#000"/><rect x="11" y="9" width="4" height="1" fill="#808000"/><rect x="15" y="9" width="1" height="1" fill="#000"/><rect x="3" y="10" width="2" height="1" fill="#000"/><rect x="5" y="10" width="3" height="1" fill="#808000"/><rect x="8" y="10" width="2" height="1" fill="#000"/><rect x="10" y="10" width="3" height="1" fill="#808000"/><rect x="13" y="10" width="3" height="1" fill="#000"/><rect x="5" y="11" width="9" height="1" fill="#808000"/><rect x="14" y="11" width="1" height="1" fill="#000"/><rect x="4" y="12" width="10" height="1" fill="#808000"/><rect x="14" y="12" width="1" height="1" fill="#000"/><rect x="4" y="13" width="2" height="1" fill="#808000"/><rect x="6" y="13" width="2" height="1" fill="#000"/><rect x="8" y="13" width="2" height="1" fill="#808000"/><rect x="10" y="13" width="2" height="1" fill="#000"/><rect x="12" y="13" width="2" height="1" fill="#808000"/><rect x="14" y="13" width="1" height="1" fill="#000"/><rect x="5" y="14" width="2" height="1" fill="#000"/><rect x="8" y="14" width="2" height="1" fill="#808000"/><rect x="10" y="14" width="1" height="1" fill="#000"/><rect x="12" y="14" width="2" height="1" fill="#000"/><rect x="8" y="15" width="3" height="1" fill="#000"/></svg>
<div class="a" style="left:753px;top:87px;width:48px;height:16px;background:#f0f0f0;"></div><span class="t s" id="t28" style="left:753.5px;top:89.5px;font-size:11.5px;color:#000;transform:scaleX(0.9286);">Fonctions</span>
<svg style="left:739px;top:107px" width="9" height="9" viewBox="0 0 9 9" shape-rendering="crispEdges"><rect x="0.5" y="0.5" width="8" height="8" rx="1.2" fill="#fff" stroke="#949494" stroke-width="1" shape-rendering="auto"/><rect x="1" y="6" width="7" height="2" fill="#ebebeb"/><rect x="1" y="5" width="7" height="1" fill="#f6f6f6"/><rect x="2" y="4" width="5" height="1" fill="#4964b0"/><rect x="4" y="2" width="1" height="5" fill="#223f86"/></svg>
<svg style="left:751px;top:103px" width="17" height="16" viewBox="0 0 17 16" shape-rendering="crispEdges"><rect x="2" y="0" width="5" height="1" fill="#808080"/><rect x="1" y="1" width="1" height="1" fill="#808080"/><rect x="2" y="1" width="5" height="1" fill="url(#dy)"/><rect x="7" y="1" width="1" height="1" fill="#808080"/><rect x="0" y="2" width="1" height="1" fill="#808080"/><rect x="1" y="2" width="6" height="1" fill="url(#dy)"/><rect x="7" y="2" width="7" height="1" fill="#808080"/><rect x="0" y="3" width="1" height="1" fill="#808080"/><rect x="1" y="3" width="12" height="1" fill="url(#dy)"/><rect x="13" y="3" width="1" height="1" fill="#808080"/><rect x="0" y="4" width="1" height="1" fill="#808080"/><rect x="1" y="4" width="12" height="1" fill="url(#dy)"/><rect x="13" y="4" width="1" height="1" fill="#808080"/><rect x="0" y="5" width="1" height="1" fill="#808080"/><rect x="1" y="5" width="12" height="1" fill="url(#dy)"/><rect x="13" y="5" width="1" height="1" fill="#808080"/><rect x="0" y="6" width="1" height="1" fill="#808080"/><rect x="1" y="6" width="12" height="1" fill="url(#dy)"/><rect x="13" y="6" width="1" height="1" fill="#808080"/><rect x="0" y="7" width="1" height="1" fill="#808080"/><rect x="1" y="7" width="12" height="1" fill="url(#dy)"/><rect x="13" y="7" width="1" height="1" fill="#808080"/><rect x="0" y="8" width="1" height="1" fill="#808080"/><rect x="1" y="8" width="12" height="1" fill="url(#dy)"/><rect x="13" y="8" width="1" height="1" fill="#808080"/><rect x="0" y="9" width="1" height="1" fill="#808080"/><rect x="1" y="9" width="12" height="1" fill="url(#dy)"/><rect x="13" y="9" width="1" height="1" fill="#808080"/><rect x="0" y="10" width="1" height="1" fill="#808080"/><rect x="1" y="10" width="12" height="1" fill="url(#dy)"/><rect x="13" y="10" width="1" height="1" fill="#808080"/><rect x="0" y="11" width="14" height="1" fill="#808080"/><rect x="8" y="3" width="2" height="1" fill="#808000"/><rect x="10" y="3" width="1" height="1" fill="#000"/><rect x="5" y="4" width="1" height="1" fill="#808000"/><rect x="6" y="4" width="1" height="1" fill="#000"/><rect x="8" y="4" width="2" height="1" fill="#808000"/><rect x="10" y="4" width="1" height="1" fill="#000"/><rect x="12" y="4" width="2" height="1" fill="#808000"/><rect x="4" y="5" width="10" height="1" fill="#808000"/><rect x="14" y="5" width="1" height="1" fill="#000"/><rect x="5" y="6" width="9" height="1" fill="#808000"/><rect x="14" y="6" width="1" height="1" fill="#000"/><rect x="5" y="7" width="3" height="1" fill="#808000"/><rect x="8" y="7" width="3" height="1" fill="#000"/><rect x="11" y="7" width="2" height="1" fill="#808000"/><rect x="13" y="7" width="1" height="1" fill="#000"/><rect x="3" y="8" width="4" height="1" fill="#808000"/><rect x="7" y="8" width="2" height="1" fill="#000"/><rect x="9" y="8" width="1" height="1" fill="#fff"/><rect x="10" y="8" width="1" height="1" fill="#000"/><rect x="11" y="8" width="4" height="1" fill="#808000"/><rect x="15" y="8" width="1" height="1" fill="#000"/><rect x="3" y="9" width="4" height="1" fill="#808000"/><rect x="7" y="9" width="1" height="1" fill="#000"/><rect x="8" y="9" width="1" height="1" fill="#fff"/><rect x="9" y="9" width="2" height="1" fill="#000"/><rect x="11" y="9" width="4" height="1" fill="#808000"/><rect x="15" y="9" width="1" height="1" fill="#000"/><rect x="3" y="10" width="2" height="1" fill="#000"/><rect x="5" y="10" width="3" height="1" fill="#808000"/><rect x="8" y="10" width="2" height="1" fill="#000"/><rect x="10" y="10" width="3" height="1" fill="#808000"/><rect x="13" y="10" width="3" height="1" fill="#000"/><rect x="5" y="11" width="9" height="1" fill="#808000"/><rect x="14" y="11" width="1" height="1" fill="#000"/><rect x="4" y="12" width="10" height="1" fill="#808000"/><rect x="14" y="12" width="1" height="1" fill="#000"/><rect x="4" y="13" width="2" height="1" fill="#808000"/><rect x="6" y="13" width="2" height="1" fill="#000"/><rect x="8" y="13" width="2" height="1" fill="#808000"/><rect x="10" y="13" width="2" height="1" fill="#000"/><rect x="12" y="13" width="2" height="1" fill="#808000"/><rect x="14" y="13" width="1" height="1" fill="#000"/><rect x="5" y="14" width="2" height="1" fill="#000"/><rect x="8" y="14" width="2" height="1" fill="#808000"/><rect x="10" y="14" width="1" height="1" fill="#000"/><rect x="12" y="14" width="2" height="1" fill="#000"/><rect x="8" y="15" width="3" height="1" fill="#000"/></svg>
<span class="t s" id="t29" style="left:768.6px;top:105.5px;font-size:11.5px;color:#000;transform:scaleX(0.9163);">Alertes</span>
<svg style="left:739px;top:123px" width="9" height="9" viewBox="0 0 9 9" shape-rendering="crispEdges"><rect x="0.5" y="0.5" width="8" height="8" rx="1.2" fill="#fff" stroke="#949494" stroke-width="1" shape-rendering="auto"/><rect x="1" y="6" width="7" height="2" fill="#ebebeb"/><rect x="1" y="5" width="7" height="1" fill="#f6f6f6"/><rect x="2" y="4" width="5" height="1" fill="#4964b0"/><rect x="4" y="2" width="1" height="5" fill="#223f86"/></svg>
<svg style="left:751px;top:119px" width="17" height="16" viewBox="0 0 17 16" shape-rendering="crispEdges"><rect x="2" y="0" width="5" height="1" fill="#808080"/><rect x="1" y="1" width="1" height="1" fill="#808080"/><rect x="2" y="1" width="5" height="1" fill="url(#dy)"/><rect x="7" y="1" width="1" height="1" fill="#808080"/><rect x="0" y="2" width="1" height="1" fill="#808080"/><rect x="1" y="2" width="6" height="1" fill="url(#dy)"/><rect x="7" y="2" width="7" height="1" fill="#808080"/><rect x="0" y="3" width="1" height="1" fill="#808080"/><rect x="1" y="3" width="12" height="1" fill="url(#dy)"/><rect x="13" y="3" width="1" height="1" fill="#808080"/><rect x="0" y="4" width="1" height="1" fill="#808080"/><rect x="1" y="4" width="12" height="1" fill="url(#dy)"/><rect x="13" y="4" width="1" height="1" fill="#808080"/><rect x="0" y="5" width="1" height="1" fill="#808080"/><rect x="1" y="5" width="12" height="1" fill="url(#dy)"/><rect x="13" y="5" width="1" height="1" fill="#808080"/><rect x="0" y="6" width="1" height="1" fill="#808080"/><rect x="1" y="6" width="12" height="1" fill="url(#dy)"/><rect x="13" y="6" width="1" height="1" fill="#808080"/><rect x="0" y="7" width="1" height="1" fill="#808080"/><rect x="1" y="7" width="12" height="1" fill="url(#dy)"/><rect x="13" y="7" width="1" height="1" fill="#808080"/><rect x="0" y="8" width="1" height="1" fill="#808080"/><rect x="1" y="8" width="12" height="1" fill="url(#dy)"/><rect x="13" y="8" width="1" height="1" fill="#808080"/><rect x="0" y="9" width="1" height="1" fill="#808080"/><rect x="1" y="9" width="12" height="1" fill="url(#dy)"/><rect x="13" y="9" width="1" height="1" fill="#808080"/><rect x="0" y="10" width="1" height="1" fill="#808080"/><rect x="1" y="10" width="12" height="1" fill="url(#dy)"/><rect x="13" y="10" width="1" height="1" fill="#808080"/><rect x="0" y="11" width="14" height="1" fill="#808080"/><rect x="8" y="3" width="2" height="1" fill="#808000"/><rect x="10" y="3" width="1" height="1" fill="#000"/><rect x="5" y="4" width="1" height="1" fill="#808000"/><rect x="6" y="4" width="1" height="1" fill="#000"/><rect x="8" y="4" width="2" height="1" fill="#808000"/><rect x="10" y="4" width="1" height="1" fill="#000"/><rect x="12" y="4" width="2" height="1" fill="#808000"/><rect x="4" y="5" width="10" height="1" fill="#808000"/><rect x="14" y="5" width="1" height="1" fill="#000"/><rect x="5" y="6" width="9" height="1" fill="#808000"/><rect x="14" y="6" width="1" height="1" fill="#000"/><rect x="5" y="7" width="3" height="1" fill="#808000"/><rect x="8" y="7" width="3" height="1" fill="#000"/><rect x="11" y="7" width="2" height="1" fill="#808000"/><rect x="13" y="7" width="1" height="1" fill="#000"/><rect x="3" y="8" width="4" height="1" fill="#808000"/><rect x="7" y="8" width="2" height="1" fill="#000"/><rect x="9" y="8" width="1" height="1" fill="#fff"/><rect x="10" y="8" width="1" height="1" fill="#000"/><rect x="11" y="8" width="4" height="1" fill="#808000"/><rect x="15" y="8" width="1" height="1" fill="#000"/><rect x="3" y="9" width="4" height="1" fill="#808000"/><rect x="7" y="9" width="1" height="1" fill="#000"/><rect x="8" y="9" width="1" height="1" fill="#fff"/><rect x="9" y="9" width="2" height="1" fill="#000"/><rect x="11" y="9" width="4" height="1" fill="#808000"/><rect x="15" y="9" width="1" height="1" fill="#000"/><rect x="3" y="10" width="2" height="1" fill="#000"/><rect x="5" y="10" width="3" height="1" fill="#808000"/><rect x="8" y="10" width="2" height="1" fill="#000"/><rect x="10" y="10" width="3" height="1" fill="#808000"/><rect x="13" y="10" width="3" height="1" fill="#000"/><rect x="5" y="11" width="9" height="1" fill="#808000"/><rect x="14" y="11" width="1" height="1" fill="#000"/><rect x="4" y="12" width="10" height="1" fill="#808000"/><rect x="14" y="12" width="1" height="1" fill="#000"/><rect x="4" y="13" width="2" height="1" fill="#808000"/><rect x="6" y="13" width="2" height="1" fill="#000"/><rect x="8" y="13" width="2" height="1" fill="#808000"/><rect x="10" y="13" width="2" height="1" fill="#000"/><rect x="12" y="13" width="2" height="1" fill="#808000"/><rect x="14" y="13" width="1" height="1" fill="#000"/><rect x="5" y="14" width="2" height="1" fill="#000"/><rect x="8" y="14" width="2" height="1" fill="#808000"/><rect x="10" y="14" width="1" height="1" fill="#000"/><rect x="12" y="14" width="2" height="1" fill="#000"/><rect x="8" y="15" width="3" height="1" fill="#000"/></svg>
<span class="t s" id="t30" style="left:768.6px;top:121.5px;font-size:11.5px;color:#000;transform:scaleX(0.9406);">Chaînes</span>
<svg style="left:739px;top:139px" width="9" height="9" viewBox="0 0 9 9" shape-rendering="crispEdges"><rect x="0.5" y="0.5" width="8" height="8" rx="1.2" fill="#fff" stroke="#949494" stroke-width="1" shape-rendering="auto"/><rect x="1" y="6" width="7" height="2" fill="#ebebeb"/><rect x="1" y="5" width="7" height="1" fill="#f6f6f6"/><rect x="2" y="4" width="5" height="1" fill="#4964b0"/><rect x="4" y="2" width="1" height="5" fill="#223f86"/></svg>
<svg style="left:751px;top:135px" width="17" height="16" viewBox="0 0 17 16" shape-rendering="crispEdges"><rect x="2" y="0" width="5" height="1" fill="#808080"/><rect x="1" y="1" width="1" height="1" fill="#808080"/><rect x="2" y="1" width="5" height="1" fill="url(#dy)"/><rect x="7" y="1" width="1" height="1" fill="#808080"/><rect x="0" y="2" width="1" height="1" fill="#808080"/><rect x="1" y="2" width="6" height="1" fill="url(#dy)"/><rect x="7" y="2" width="7" height="1" fill="#808080"/><rect x="0" y="3" width="1" height="1" fill="#808080"/><rect x="1" y="3" width="12" height="1" fill="url(#dy)"/><rect x="13" y="3" width="1" height="1" fill="#808080"/><rect x="0" y="4" width="1" height="1" fill="#808080"/><rect x="1" y="4" width="12" height="1" fill="url(#dy)"/><rect x="13" y="4" width="1" height="1" fill="#808080"/><rect x="0" y="5" width="1" height="1" fill="#808080"/><rect x="1" y="5" width="12" height="1" fill="url(#dy)"/><rect x="13" y="5" width="1" height="1" fill="#808080"/><rect x="0" y="6" width="1" height="1" fill="#808080"/><rect x="1" y="6" width="12" height="1" fill="url(#dy)"/><rect x="13" y="6" width="1" height="1" fill="#808080"/><rect x="0" y="7" width="1" height="1" fill="#808080"/><rect x="1" y="7" width="12" height="1" fill="url(#dy)"/><rect x="13" y="7" width="1" height="1" fill="#808080"/><rect x="0" y="8" width="1" height="1" fill="#808080"/><rect x="1" y="8" width="12" height="1" fill="url(#dy)"/><rect x="13" y="8" width="1" height="1" fill="#808080"/><rect x="0" y="9" width="1" height="1" fill="#808080"/><rect x="1" y="9" width="12" height="1" fill="url(#dy)"/><rect x="13" y="9" width="1" height="1" fill="#808080"/><rect x="0" y="10" width="1" height="1" fill="#808080"/><rect x="1" y="10" width="12" height="1" fill="url(#dy)"/><rect x="13" y="10" width="1" height="1" fill="#808080"/><rect x="0" y="11" width="14" height="1" fill="#808080"/><rect x="8" y="3" width="2" height="1" fill="#808000"/><rect x="10" y="3" width="1" height="1" fill="#000"/><rect x="5" y="4" width="1" height="1" fill="#808000"/><rect x="6" y="4" width="1" height="1" fill="#000"/><rect x="8" y="4" width="2" height="1" fill="#808000"/><rect x="10" y="4" width="1" height="1" fill="#000"/><rect x="12" y="4" width="2" height="1" fill="#808000"/><rect x="4" y="5" width="10" height="1" fill="#808000"/><rect x="14" y="5" width="1" height="1" fill="#000"/><rect x="5" y="6" width="9" height="1" fill="#808000"/><rect x="14" y="6" width="1" height="1" fill="#000"/><rect x="5" y="7" width="3" height="1" fill="#808000"/><rect x="8" y="7" width="3" height="1" fill="#000"/><rect x="11" y="7" width="2" height="1" fill="#808000"/><rect x="13" y="7" width="1" height="1" fill="#000"/><rect x="3" y="8" width="4" height="1" fill="#808000"/><rect x="7" y="8" width="2" height="1" fill="#000"/><rect x="9" y="8" width="1" height="1" fill="#fff"/><rect x="10" y="8" width="1" height="1" fill="#000"/><rect x="11" y="8" width="4" height="1" fill="#808000"/><rect x="15" y="8" width="1" height="1" fill="#000"/><rect x="3" y="9" width="4" height="1" fill="#808000"/><rect x="7" y="9" width="1" height="1" fill="#000"/><rect x="8" y="9" width="1" height="1" fill="#fff"/><rect x="9" y="9" width="2" height="1" fill="#000"/><rect x="11" y="9" width="4" height="1" fill="#808000"/><rect x="15" y="9" width="1" height="1" fill="#000"/><rect x="3" y="10" width="2" height="1" fill="#000"/><rect x="5" y="10" width="3" height="1" fill="#808000"/><rect x="8" y="10" width="2" height="1" fill="#000"/><rect x="10" y="10" width="3" height="1" fill="#808000"/><rect x="13" y="10" width="3" height="1" fill="#000"/><rect x="5" y="11" width="9" height="1" fill="#808000"/><rect x="14" y="11" width="1" height="1" fill="#000"/><rect x="4" y="12" width="10" height="1" fill="#808000"/><rect x="14" y="12" width="1" height="1" fill="#000"/><rect x="4" y="13" width="2" height="1" fill="#808000"/><rect x="6" y="13" width="2" height="1" fill="#000"/><rect x="8" y="13" width="2" height="1" fill="#808000"/><rect x="10" y="13" width="2" height="1" fill="#000"/><rect x="12" y="13" width="2" height="1" fill="#808000"/><rect x="14" y="13" width="1" height="1" fill="#000"/><rect x="5" y="14" width="2" height="1" fill="#000"/><rect x="8" y="14" width="2" height="1" fill="#808000"/><rect x="10" y="14" width="1" height="1" fill="#000"/><rect x="12" y="14" width="2" height="1" fill="#000"/><rect x="8" y="15" width="3" height="1" fill="#000"/></svg>
<span class="t s" id="t31" style="left:768.6px;top:137.5px;font-size:11.5px;color:#000;transform:scaleX(0.9160);">Constantes</span>
<svg style="left:739px;top:155px" width="9" height="9" viewBox="0 0 9 9" shape-rendering="crispEdges"><rect x="0.5" y="0.5" width="8" height="8" rx="1.2" fill="#fff" stroke="#949494" stroke-width="1" shape-rendering="auto"/><rect x="1" y="6" width="7" height="2" fill="#ebebeb"/><rect x="1" y="5" width="7" height="1" fill="#f6f6f6"/><rect x="2" y="4" width="5" height="1" fill="#4964b0"/></svg>
<svg style="left:751px;top:151px" width="17" height="16" viewBox="0 0 17 16" shape-rendering="crispEdges"><rect x="2" y="0" width="5" height="1" fill="#808080"/><rect x="1" y="1" width="1" height="1" fill="#808080"/><rect x="2" y="1" width="5" height="1" fill="url(#dy)"/><rect x="7" y="1" width="1" height="1" fill="#808080"/><rect x="0" y="2" width="1" height="1" fill="#808080"/><rect x="1" y="2" width="6" height="1" fill="url(#dy)"/><rect x="7" y="2" width="7" height="1" fill="#808080"/><rect x="0" y="3" width="1" height="1" fill="#808080"/><rect x="1" y="3" width="12" height="1" fill="url(#dy)"/><rect x="13" y="3" width="1" height="1" fill="#808080"/><rect x="0" y="4" width="1" height="1" fill="#808080"/><rect x="1" y="4" width="12" height="1" fill="url(#dy)"/><rect x="13" y="4" width="1" height="1" fill="#808080"/><rect x="0" y="5" width="1" height="1" fill="#808080"/><rect x="1" y="5" width="12" height="1" fill="url(#dy)"/><rect x="13" y="5" width="1" height="1" fill="#808080"/><rect x="0" y="6" width="1" height="1" fill="#808080"/><rect x="1" y="6" width="12" height="1" fill="url(#dy)"/><rect x="13" y="6" width="1" height="1" fill="#808080"/><rect x="0" y="7" width="1" height="1" fill="#808080"/><rect x="1" y="7" width="12" height="1" fill="url(#dy)"/><rect x="13" y="7" width="1" height="1" fill="#808080"/><rect x="0" y="8" width="1" height="1" fill="#808080"/><rect x="1" y="8" width="12" height="1" fill="url(#dy)"/><rect x="13" y="8" width="1" height="1" fill="#808080"/><rect x="0" y="9" width="1" height="1" fill="#808080"/><rect x="1" y="9" width="12" height="1" fill="url(#dy)"/><rect x="13" y="9" width="1" height="1" fill="#808080"/><rect x="0" y="10" width="1" height="1" fill="#808080"/><rect x="1" y="10" width="12" height="1" fill="url(#dy)"/><rect x="13" y="10" width="1" height="1" fill="#808080"/><rect x="0" y="11" width="14" height="1" fill="#808080"/><rect x="8" y="3" width="2" height="1" fill="#808000"/><rect x="10" y="3" width="1" height="1" fill="#000"/><rect x="5" y="4" width="1" height="1" fill="#808000"/><rect x="6" y="4" width="1" height="1" fill="#000"/><rect x="8" y="4" width="2" height="1" fill="#808000"/><rect x="10" y="4" width="1" height="1" fill="#000"/><rect x="12" y="4" width="2" height="1" fill="#808000"/><rect x="4" y="5" width="10" height="1" fill="#808000"/><rect x="14" y="5" width="1" height="1" fill="#000"/><rect x="5" y="6" width="9" height="1" fill="#808000"/><rect x="14" y="6" width="1" height="1" fill="#000"/><rect x="5" y="7" width="3" height="1" fill="#808000"/><rect x="8" y="7" width="3" height="1" fill="#000"/><rect x="11" y="7" width="2" height="1" fill="#808000"/><rect x="13" y="7" width="1" height="1" fill="#000"/><rect x="3" y="8" width="4" height="1" fill="#808000"/><rect x="7" y="8" width="2" height="1" fill="#000"/><rect x="9" y="8" width="1" height="1" fill="#fff"/><rect x="10" y="8" width="1" height="1" fill="#000"/><rect x="11" y="8" width="4" height="1" fill="#808000"/><rect x="15" y="8" width="1" height="1" fill="#000"/><rect x="3" y="9" width="4" height="1" fill="#808000"/><rect x="7" y="9" width="1" height="1" fill="#000"/><rect x="8" y="9" width="1" height="1" fill="#fff"/><rect x="9" y="9" width="2" height="1" fill="#000"/><rect x="11" y="9" width="4" height="1" fill="#808000"/><rect x="15" y="9" width="1" height="1" fill="#000"/><rect x="3" y="10" width="2" height="1" fill="#000"/><rect x="5" y="10" width="3" height="1" fill="#808000"/><rect x="8" y="10" width="2" height="1" fill="#000"/><rect x="10" y="10" width="3" height="1" fill="#808000"/><rect x="13" y="10" width="3" height="1" fill="#000"/><rect x="5" y="11" width="9" height="1" fill="#808000"/><rect x="14" y="11" width="1" height="1" fill="#000"/><rect x="4" y="12" width="10" height="1" fill="#808000"/><rect x="14" y="12" width="1" height="1" fill="#000"/><rect x="4" y="13" width="2" height="1" fill="#808000"/><rect x="6" y="13" width="2" height="1" fill="#000"/><rect x="8" y="13" width="2" height="1" fill="#808000"/><rect x="10" y="13" width="2" height="1" fill="#000"/><rect x="12" y="13" width="2" height="1" fill="#808000"/><rect x="14" y="13" width="1" height="1" fill="#000"/><rect x="5" y="14" width="2" height="1" fill="#000"/><rect x="8" y="14" width="2" height="1" fill="#808000"/><rect x="10" y="14" width="1" height="1" fill="#000"/><rect x="12" y="14" width="2" height="1" fill="#000"/><rect x="8" y="15" width="3" height="1" fill="#000"/></svg>
<span class="t s" id="t32" style="left:768.6px;top:153.5px;font-size:11.5px;color:#000;transform:scaleX(0.9234);">Conversion de type</span>
<span class="t s" id="t33" style="left:767.2px;top:169.5px;font-size:11.5px;color:#000;transform:scaleX(0.9117);">CBool (nombre ou devise)</span>
<span class="t s" id="t34" style="left:767.2px;top:185.5px;font-size:11.5px;color:#000;transform:scaleX(0.9269);">CCur (nombre, devise ou chaîne)</span>
<svg style="left:754px;top:203px" width="9" height="9" viewBox="0 0 9 9" shape-rendering="crispEdges"><rect x="0.5" y="0.5" width="8" height="8" rx="1.2" fill="#fff" stroke="#949494" stroke-width="1" shape-rendering="auto"/><rect x="1" y="6" width="7" height="2" fill="#ebebeb"/><rect x="1" y="5" width="7" height="1" fill="#f6f6f6"/><rect x="2" y="4" width="5" height="1" fill="#4964b0"/></svg>
<span class="t s" id="t35" style="left:767.2px;top:201.5px;font-size:11.5px;color:#000;transform:scaleX(0.9445);">CDate</span>
<span class="t s" id="t36" style="left:781.7px;top:217.5px;font-size:11.5px;color:#000;transform:scaleX(0.9168);">CDate (AAAA, MM, JJ)</span>
<span class="t s" id="t37" style="left:781.7px;top:233.5px;font-size:11.5px;color:#000;transform:scaleX(0.9274);">CDate (dateHeure)</span>
<span class="t s" id="t38" style="left:781.7px;top:249.5px;font-size:11.5px;color:#000;transform:scaleX(0.9335);">CDate (nombre ou chaîne)</span>
<svg style="left:754px;top:267px" width="9" height="9" viewBox="0 0 9 9" shape-rendering="crispEdges"><rect x="0.5" y="0.5" width="8" height="8" rx="1.2" fill="#fff" stroke="#949494" stroke-width="1" shape-rendering="auto"/><rect x="1" y="6" width="7" height="2" fill="#ebebeb"/><rect x="1" y="5" width="7" height="1" fill="#f6f6f6"/><rect x="2" y="4" width="5" height="1" fill="#4964b0"/><rect x="4" y="2" width="1" height="5" fill="#223f86"/></svg>
<span class="t s" id="t39" style="left:767.2px;top:265.5px;font-size:11.5px;color:#000;transform:scaleX(0.9249);">CDateTime</span>
<span class="t s" id="t40" style="left:767.2px;top:281.5px;font-size:11.5px;color:#000;transform:scaleX(0.9330);">CDbl (nombre, devise, chaîne ou booléen)</span>
<svg style="left:754px;top:299px" width="9" height="9" viewBox="0 0 9 9" shape-rendering="crispEdges"><rect x="0.5" y="0.5" width="8" height="8" rx="1.2" fill="#fff" stroke="#949494" stroke-width="1" shape-rendering="auto"/><rect x="1" y="6" width="7" height="2" fill="#ebebeb"/><rect x="1" y="5" width="7" height="1" fill="#f6f6f6"/><rect x="2" y="4" width="5" height="1" fill="#4964b0"/></svg>
<span class="t s" id="t41" style="left:767.2px;top:297.5px;font-size:11.5px;color:#000;transform:scaleX(0.9739);">CStr</span>
<span class="t s" id="t42" style="left:781.7px;top:313.5px;font-size:11.5px;color:#000;transform:scaleX(0.8862);">CStr (x)</span>
<span class="t s" id="t43" style="left:781.7px;top:329.5px;font-size:11.5px;color:#000;transform:scaleX(0.9043);">CStr (x, y)</span>
<span class="t s" id="t44" style="left:781.7px;top:345.5px;font-size:11.5px;color:#000;transform:scaleX(0.9059);">CStr (x, y, z)</span>
<span class="t s" id="t45" style="left:781.7px;top:361.5px;font-size:11.5px;color:#000;transform:scaleX(0.9211);">CStr (x, y, z, w)</span>
<span class="t s" id="t46" style="left:781.7px;top:377.5px;font-size:11.5px;color:#000;transform:scaleX(0.9245);">CStr (x, y, z, w, q)</span>
<svg style="left:754px;top:395px" width="9" height="9" viewBox="0 0 9 9" shape-rendering="crispEdges"><rect x="0.5" y="0.5" width="8" height="8" rx="1.2" fill="#fff" stroke="#949494" stroke-width="1" shape-rendering="auto"/><rect x="1" y="6" width="7" height="2" fill="#ebebeb"/><rect x="1" y="5" width="7" height="1" fill="#f6f6f6"/><rect x="2" y="4" width="5" height="1" fill="#4964b0"/><rect x="4" y="2" width="1" height="5" fill="#223f86"/></svg>
<span class="t s" id="t47" style="left:767.2px;top:393.5px;font-size:11.5px;color:#000;transform:scaleX(0.9211);">CTime</span>
<svg style="left:739px;top:411px" width="9" height="9" viewBox="0 0 9 9" shape-rendering="crispEdges"><rect x="0.5" y="0.5" width="8" height="8" rx="1.2" fill="#fff" stroke="#949494" stroke-width="1" shape-rendering="auto"/><rect x="1" y="6" width="7" height="2" fill="#ebebeb"/><rect x="1" y="5" width="7" height="1" fill="#f6f6f6"/><rect x="2" y="4" width="5" height="1" fill="#4964b0"/></svg>
<svg style="left:751px;top:407px" width="17" height="16" viewBox="0 0 17 16" shape-rendering="crispEdges"><rect x="2" y="0" width="5" height="1" fill="#808080"/><rect x="1" y="1" width="1" height="1" fill="#808080"/><rect x="2" y="1" width="5" height="1" fill="url(#dy)"/><rect x="7" y="1" width="1" height="1" fill="#808080"/><rect x="0" y="2" width="1" height="1" fill="#808080"/><rect x="1" y="2" width="6" height="1" fill="url(#dy)"/><rect x="7" y="2" width="7" height="1" fill="#808080"/><rect x="0" y="3" width="1" height="1" fill="#808080"/><rect x="1" y="3" width="12" height="1" fill="url(#dy)"/><rect x="13" y="3" width="1" height="1" fill="#808080"/><rect x="0" y="4" width="1" height="1" fill="#808080"/><rect x="1" y="4" width="12" height="1" fill="url(#dy)"/><rect x="13" y="4" width="1" height="1" fill="#808080"/><rect x="0" y="5" width="1" height="1" fill="#808080"/><rect x="1" y="5" width="12" height="1" fill="url(#dy)"/><rect x="13" y="5" width="1" height="1" fill="#808080"/><rect x="0" y="6" width="1" height="1" fill="#808080"/><rect x="1" y="6" width="12" height="1" fill="url(#dy)"/><rect x="13" y="6" width="1" height="1" fill="#808080"/><rect x="0" y="7" width="1" height="1" fill="#808080"/><rect x="1" y="7" width="12" height="1" fill="url(#dy)"/><rect x="13" y="7" width="1" height="1" fill="#808080"/><rect x="0" y="8" width="1" height="1" fill="#808080"/><rect x="1" y="8" width="12" height="1" fill="url(#dy)"/><rect x="13" y="8" width="1" height="1" fill="#808080"/><rect x="0" y="9" width="1" height="1" fill="#808080"/><rect x="1" y="9" width="12" height="1" fill="url(#dy)"/><rect x="13" y="9" width="1" height="1" fill="#808080"/><rect x="0" y="10" width="1" height="1" fill="#808080"/><rect x="1" y="10" width="12" height="1" fill="url(#dy)"/><rect x="13" y="10" width="1" height="1" fill="#808080"/><rect x="0" y="11" width="14" height="1" fill="#808080"/><rect x="8" y="3" width="2" height="1" fill="#808000"/><rect x="10" y="3" width="1" height="1" fill="#000"/><rect x="5" y="4" width="1" height="1" fill="#808000"/><rect x="6" y="4" width="1" height="1" fill="#000"/><rect x="8" y="4" width="2" height="1" fill="#808000"/><rect x="10" y="4" width="1" height="1" fill="#000"/><rect x="12" y="4" width="2" height="1" fill="#808000"/><rect x="4" y="5" width="10" height="1" fill="#808000"/><rect x="14" y="5" width="1" height="1" fill="#000"/><rect x="5" y="6" width="9" height="1" fill="#808000"/><rect x="14" y="6" width="1" height="1" fill="#000"/><rect x="5" y="7" width="3" height="1" fill="#808000"/><rect x="8" y="7" width="3" height="1" fill="#000"/><rect x="11" y="7" width="2" height="1" fill="#808000"/><rect x="13" y="7" width="1" height="1" fill="#000"/><rect x="3" y="8" width="4" height="1" fill="#808000"/><rect x="7" y="8" width="2" height="1" fill="#000"/><rect x="9" y="8" width="1" height="1" fill="#fff"/><rect x="10" y="8" width="1" height="1" fill="#000"/><rect x="11" y="8" width="4" height="1" fill="#808000"/><rect x="15" y="8" width="1" height="1" fill="#000"/><rect x="3" y="9" width="4" height="1" fill="#808000"/><rect x="7" y="9" width="1" height="1" fill="#000"/><rect x="8" y="9" width="1" height="1" fill="#fff"/><rect x="9" y="9" width="2" height="1" fill="#000"/><rect x="11" y="9" width="4" height="1" fill="#808000"/><rect x="15" y="9" width="1" height="1" fill="#000"/><rect x="3" y="10" width="2" height="1" fill="#000"/><rect x="5" y="10" width="3" height="1" fill="#808000"/><rect x="8" y="10" width="2" height="1" fill="#000"/><rect x="10" y="10" width="3" height="1" fill="#808000"/><rect x="13" y="10" width="3" height="1" fill="#000"/><rect x="5" y="11" width="9" height="1" fill="#808000"/><rect x="14" y="11" width="1" height="1" fill="#000"/><rect x="4" y="12" width="10" height="1" fill="#808000"/><rect x="14" y="12" width="1" height="1" fill="#000"/><rect x="4" y="13" width="2" height="1" fill="#808000"/><rect x="6" y="13" width="2" height="1" fill="#000"/><rect x="8" y="13" width="2" height="1" fill="#808000"/><rect x="10" y="13" width="2" height="1" fill="#000"/><rect x="12" y="13" width="2" height="1" fill="#808000"/><rect x="14" y="13" width="1" height="1" fill="#000"/><rect x="5" y="14" width="2" height="1" fill="#000"/><rect x="8" y="14" width="2" height="1" fill="#808000"/><rect x="10" y="14" width="1" height="1" fill="#000"/><rect x="12" y="14" width="2" height="1" fill="#000"/><rect x="8" y="15" width="3" height="1" fill="#000"/></svg>
<span class="t s" id="t48" style="left:768.6px;top:409.5px;font-size:11.5px;color:#000;transform:scaleX(0.9356);">Date et heure</span>
<svg style="left:754px;top:427px" width="9" height="9" viewBox="0 0 9 9" shape-rendering="crispEdges"><rect x="0.5" y="0.5" width="8" height="8" rx="1.2" fill="#fff" stroke="#949494" stroke-width="1" shape-rendering="auto"/><rect x="1" y="6" width="7" height="2" fill="#ebebeb"/><rect x="1" y="5" width="7" height="1" fill="#f6f6f6"/><rect x="2" y="4" width="5" height="1" fill="#4964b0"/><rect x="4" y="2" width="1" height="5" fill="#223f86"/></svg>
<svg style="left:766px;top:423px" width="17" height="16" viewBox="0 0 17 16" shape-rendering="crispEdges"><rect x="2" y="0" width="5" height="1" fill="#808080"/><rect x="1" y="1" width="1" height="1" fill="#808080"/><rect x="2" y="1" width="5" height="1" fill="url(#dy)"/><rect x="7" y="1" width="1" height="1" fill="#808080"/><rect x="0" y="2" width="1" height="1" fill="#808080"/><rect x="1" y="2" width="6" height="1" fill="url(#dy)"/><rect x="7" y="2" width="7" height="1" fill="#808080"/><rect x="0" y="3" width="1" height="1" fill="#808080"/><rect x="1" y="3" width="12" height="1" fill="url(#dy)"/><rect x="13" y="3" width="1" height="1" fill="#808080"/><rect x="0" y="4" width="1" height="1" fill="#808080"/><rect x="1" y="4" width="12" height="1" fill="url(#dy)"/><rect x="13" y="4" width="1" height="1" fill="#808080"/><rect x="0" y="5" width="1" height="1" fill="#808080"/><rect x="1" y="5" width="12" height="1" fill="url(#dy)"/><rect x="13" y="5" width="1" height="1" fill="#808080"/><rect x="0" y="6" width="1" height="1" fill="#808080"/><rect x="1" y="6" width="12" height="1" fill="url(#dy)"/><rect x="13" y="6" width="1" height="1" fill="#808080"/><rect x="0" y="7" width="1" height="1" fill="#808080"/><rect x="1" y="7" width="12" height="1" fill="url(#dy)"/><rect x="13" y="7" width="1" height="1" fill="#808080"/><rect x="0" y="8" width="1" height="1" fill="#808080"/><rect x="1" y="8" width="12" height="1" fill="url(#dy)"/><rect x="13" y="8" width="1" height="1" fill="#808080"/><rect x="0" y="9" width="1" height="1" fill="#808080"/><rect x="1" y="9" width="12" height="1" fill="url(#dy)"/><rect x="13" y="9" width="1" height="1" fill="#808080"/><rect x="0" y="10" width="1" height="1" fill="#808080"/><rect x="1" y="10" width="12" height="1" fill="url(#dy)"/><rect x="13" y="10" width="1" height="1" fill="#808080"/><rect x="0" y="11" width="14" height="1" fill="#808080"/><rect x="8" y="3" width="2" height="1" fill="#808000"/><rect x="10" y="3" width="1" height="1" fill="#000"/><rect x="5" y="4" width="1" height="1" fill="#808000"/><rect x="6" y="4" width="1" height="1" fill="#000"/><rect x="8" y="4" width="2" height="1" fill="#808000"/><rect x="10" y="4" width="1" height="1" fill="#000"/><rect x="12" y="4" width="2" height="1" fill="#808000"/><rect x="4" y="5" width="10" height="1" fill="#808000"/><rect x="14" y="5" width="1" height="1" fill="#000"/><rect x="5" y="6" width="9" height="1" fill="#808000"/><rect x="14" y="6" width="1" height="1" fill="#000"/><rect x="5" y="7" width="3" height="1" fill="#808000"/><rect x="8" y="7" width="3" height="1" fill="#000"/><rect x="11" y="7" width="2" height="1" fill="#808000"/><rect x="13" y="7" width="1" height="1" fill="#000"/><rect x="3" y="8" width="4" height="1" fill="#808000"/><rect x="7" y="8" width="2" height="1" fill="#000"/><rect x="9" y="8" width="1" height="1" fill="#fff"/><rect x="10" y="8" width="1" height="1" fill="#000"/><rect x="11" y="8" width="4" height="1" fill="#808000"/><rect x="15" y="8" width="1" height="1" fill="#000"/><rect x="3" y="9" width="4" height="1" fill="#808000"/><rect x="7" y="9" width="1" height="1" fill="#000"/><rect x="8" y="9" width="1" height="1" fill="#fff"/><rect x="9" y="9" width="2" height="1" fill="#000"/><rect x="11" y="9" width="4" height="1" fill="#808000"/><rect x="15" y="9" width="1" height="1" fill="#000"/><rect x="3" y="10" width="2" height="1" fill="#000"/><rect x="5" y="10" width="3" height="1" fill="#808000"/><rect x="8" y="10" width="2" height="1" fill="#000"/><rect x="10" y="10" width="3" height="1" fill="#808000"/><rect x="13" y="10" width="3" height="1" fill="#000"/><rect x="5" y="11" width="9" height="1" fill="#808000"/><rect x="14" y="11" width="1" height="1" fill="#000"/><rect x="4" y="12" width="10" height="1" fill="#808000"/><rect x="14" y="12" width="1" height="1" fill="#000"/><rect x="4" y="13" width="2" height="1" fill="#808000"/><rect x="6" y="13" width="2" height="1" fill="#000"/><rect x="8" y="13" width="2" height="1" fill="#808000"/><rect x="10" y="13" width="2" height="1" fill="#000"/><rect x="12" y="13" width="2" height="1" fill="#808000"/><rect x="14" y="13" width="1" height="1" fill="#000"/><rect x="5" y="14" width="2" height="1" fill="#000"/><rect x="8" y="14" width="2" height="1" fill="#808000"/><rect x="10" y="14" width="1" height="1" fill="#000"/><rect x="12" y="14" width="2" height="1" fill="#000"/><rect x="8" y="15" width="3" height="1" fill="#000"/></svg>
<span class="t s" id="t49" style="left:783.2px;top:425.5px;font-size:11.5px;color:#000;transform:scaleX(0.9124);">Constantes pour la première semaine de l'année</span>
<svg style="left:754px;top:443px" width="9" height="9" viewBox="0 0 9 9" shape-rendering="crispEdges"><rect x="0.5" y="0.5" width="8" height="8" rx="1.2" fill="#fff" stroke="#949494" stroke-width="1" shape-rendering="auto"/><rect x="1" y="6" width="7" height="2" fill="#ebebeb"/><rect x="1" y="5" width="7" height="1" fill="#f6f6f6"/><rect x="2" y="4" width="5" height="1" fill="#4964b0"/><rect x="4" y="2" width="1" height="5" fill="#223f86"/></svg>
<svg style="left:766px;top:439px" width="17" height="16" viewBox="0 0 17 16" shape-rendering="crispEdges"><rect x="2" y="0" width="5" height="1" fill="#808080"/><rect x="1" y="1" width="1" height="1" fill="#808080"/><rect x="2" y="1" width="5" height="1" fill="url(#dy)"/><rect x="7" y="1" width="1" height="1" fill="#808080"/><rect x="0" y="2" width="1" height="1" fill="#808080"/><rect x="1" y="2" width="6" height="1" fill="url(#dy)"/><rect x="7" y="2" width="7" height="1" fill="#808080"/><rect x="0" y="3" width="1" height="1" fill="#808080"/><rect x="1" y="3" width="12" height="1" fill="url(#dy)"/><rect x="13" y="3" width="1" height="1" fill="#808080"/><rect x="0" y="4" width="1" height="1" fill="#808080"/><rect x="1" y="4" width="12" height="1" fill="url(#dy)"/><rect x="13" y="4" width="1" height="1" fill="#808080"/><rect x="0" y="5" width="1" height="1" fill="#808080"/><rect x="1" y="5" width="12" height="1" fill="url(#dy)"/><rect x="13" y="5" width="1" height="1" fill="#808080"/><rect x="0" y="6" width="1" height="1" fill="#808080"/><rect x="1" y="6" width="12" height="1" fill="url(#dy)"/><rect x="13" y="6" width="1" height="1" fill="#808080"/><rect x="0" y="7" width="1" height="1" fill="#808080"/><rect x="1" y="7" width="12" height="1" fill="url(#dy)"/><rect x="13" y="7" width="1" height="1" fill="#808080"/><rect x="0" y="8" width="1" height="1" fill="#808080"/><rect x="1" y="8" width="12" height="1" fill="url(#dy)"/><rect x="13" y="8" width="1" height="1" fill="#808080"/><rect x="0" y="9" width="1" height="1" fill="#808080"/><rect x="1" y="9" width="12" height="1" fill="url(#dy)"/><rect x="13" y="9" width="1" height="1" fill="#808080"/><rect x="0" y="10" width="1" height="1" fill="#808080"/><rect x="1" y="10" width="12" height="1" fill="url(#dy)"/><rect x="13" y="10" width="1" height="1" fill="#808080"/><rect x="0" y="11" width="14" height="1" fill="#808080"/><rect x="8" y="3" width="2" height="1" fill="#808000"/><rect x="10" y="3" width="1" height="1" fill="#000"/><rect x="5" y="4" width="1" height="1" fill="#808000"/><rect x="6" y="4" width="1" height="1" fill="#000"/><rect x="8" y="4" width="2" height="1" fill="#808000"/><rect x="10" y="4" width="1" height="1" fill="#000"/><rect x="12" y="4" width="2" height="1" fill="#808000"/><rect x="4" y="5" width="10" height="1" fill="#808000"/><rect x="14" y="5" width="1" height="1" fill="#000"/><rect x="5" y="6" width="9" height="1" fill="#808000"/><rect x="14" y="6" width="1" height="1" fill="#000"/><rect x="5" y="7" width="3" height="1" fill="#808000"/><rect x="8" y="7" width="3" height="1" fill="#000"/><rect x="11" y="7" width="2" height="1" fill="#808000"/><rect x="13" y="7" width="1" height="1" fill="#000"/><rect x="3" y="8" width="4" height="1" fill="#808000"/><rect x="7" y="8" width="2" height="1" fill="#000"/><rect x="9" y="8" width="1" height="1" fill="#fff"/><rect x="10" y="8" width="1" height="1" fill="#000"/><rect x="11" y="8" width="4" height="1" fill="#808000"/><rect x="15" y="8" width="1" height="1" fill="#000"/><rect x="3" y="9" width="4" height="1" fill="#808000"/><rect x="7" y="9" width="1" height="1" fill="#000"/><rect x="8" y="9" width="1" height="1" fill="#fff"/><rect x="9" y="9" width="2" height="1" fill="#000"/><rect x="11" y="9" width="4" height="1" fill="#808000"/><rect x="15" y="9" width="1" height="1" fill="#000"/><rect x="3" y="10" width="2" height="1" fill="#000"/><rect x="5" y="10" width="3" height="1" fill="#808000"/><rect x="8" y="10" width="2" height="1" fill="#000"/><rect x="10" y="10" width="3" height="1" fill="#808000"/><rect x="13" y="10" width="3" height="1" fill="#000"/><rect x="5" y="11" width="9" height="1" fill="#808000"/><rect x="14" y="11" width="1" height="1" fill="#000"/><rect x="4" y="12" width="10" height="1" fill="#808000"/><rect x="14" y="12" width="1" height="1" fill="#000"/><rect x="4" y="13" width="2" height="1" fill="#808000"/><rect x="6" y="13" width="2" height="1" fill="#000"/><rect x="8" y="13" width="2" height="1" fill="#808000"/><rect x="10" y="13" width="2" height="1" fill="#000"/><rect x="12" y="13" width="2" height="1" fill="#808000"/><rect x="14" y="13" width="1" height="1" fill="#000"/><rect x="5" y="14" width="2" height="1" fill="#000"/><rect x="8" y="14" width="2" height="1" fill="#808000"/><rect x="10" y="14" width="1" height="1" fill="#000"/><rect x="12" y="14" width="2" height="1" fill="#000"/><rect x="8" y="15" width="3" height="1" fill="#000"/></svg>
<span class="t s" id="t50" style="left:783.2px;top:441.5px;font-size:11.5px;color:#000;transform:scaleX(0.9073);">Constantes pour le premier jour de la semaine</span>
<div class="a" style="left:718px;top:454px;width:448px;height:3px;background:#f0f0f0;"></div>
<svg style="left:1214px;top:91px" width="9" height="9" viewBox="0 0 9 9" shape-rendering="crispEdges"><rect x="0.5" y="0.5" width="8" height="8" rx="1.2" fill="#fff" stroke="#949494" stroke-width="1" shape-rendering="auto"/><rect x="1" y="6" width="7" height="2" fill="#ebebeb"/><rect x="1" y="5" width="7" height="1" fill="#f6f6f6"/><rect x="2" y="4" width="5" height="1" fill="#4964b0"/><rect x="4" y="2" width="1" height="5" fill="#223f86"/></svg>
<svg style="left:1226px;top:87px" width="17" height="16" viewBox="0 0 17 16" shape-rendering="crispEdges"><rect x="2" y="0" width="5" height="1" fill="#808080"/><rect x="1" y="1" width="1" height="1" fill="#808080"/><rect x="2" y="1" width="5" height="1" fill="url(#dy)"/><rect x="7" y="1" width="1" height="1" fill="#808080"/><rect x="0" y="2" width="1" height="1" fill="#808080"/><rect x="1" y="2" width="6" height="1" fill="url(#dy)"/><rect x="7" y="2" width="7" height="1" fill="#808080"/><rect x="0" y="3" width="1" height="1" fill="#808080"/><rect x="1" y="3" width="12" height="1" fill="url(#dy)"/><rect x="13" y="3" width="1" height="1" fill="#808080"/><rect x="0" y="4" width="1" height="1" fill="#808080"/><rect x="1" y="4" width="12" height="1" fill="url(#dy)"/><rect x="13" y="4" width="1" height="1" fill="#808080"/><rect x="0" y="5" width="1" height="1" fill="#808080"/><rect x="1" y="5" width="12" height="1" fill="url(#dy)"/><rect x="13" y="5" width="1" height="1" fill="#808080"/><rect x="0" y="6" width="1" height="1" fill="#808080"/><rect x="1" y="6" width="12" height="1" fill="url(#dy)"/><rect x="13" y="6" width="1" height="1" fill="#808080"/><rect x="0" y="7" width="1" height="1" fill="#808080"/><rect x="1" y="7" width="12" height="1" fill="url(#dy)"/><rect x="13" y="7" width="1" height="1" fill="#808080"/><rect x="0" y="8" width="1" height="1" fill="#808080"/><rect x="1" y="8" width="12" height="1" fill="url(#dy)"/><rect x="13" y="8" width="1" height="1" fill="#808080"/><rect x="0" y="9" width="1" height="1" fill="#808080"/><rect x="1" y="9" width="12" height="1" fill="url(#dy)"/><rect x="13" y="9" width="1" height="1" fill="#808080"/><rect x="0" y="10" width="1" height="1" fill="#808080"/><rect x="1" y="10" width="12" height="1" fill="url(#dy)"/><rect x="13" y="10" width="1" height="1" fill="#808080"/><rect x="0" y="11" width="14" height="1" fill="#808080"/><rect x="6" y="4" width="3" height="1" fill="#0000ff"/><rect x="9" y="4" width="1" height="1" fill="#000"/><rect x="10" y="4" width="3" height="1" fill="#0000ff"/><rect x="13" y="4" width="1" height="1" fill="#000"/><rect x="6" y="5" width="3" height="1" fill="#0000ff"/><rect x="9" y="5" width="1" height="1" fill="#000"/><rect x="10" y="5" width="3" height="1" fill="#0000ff"/><rect x="13" y="5" width="1" height="1" fill="#000"/><rect x="6" y="6" width="7" height="1" fill="#0000ff"/><rect x="13" y="6" width="1" height="1" fill="#000"/><rect x="6" y="7" width="7" height="1" fill="#0000ff"/><rect x="13" y="7" width="1" height="1" fill="#000"/><rect x="4" y="8" width="11" height="1" fill="#0000ff"/><rect x="15" y="8" width="1" height="1" fill="#000"/><rect x="4" y="9" width="11" height="1" fill="#0000ff"/><rect x="15" y="9" width="1" height="1" fill="#000"/><rect x="4" y="10" width="11" height="1" fill="#0000ff"/><rect x="15" y="10" width="1" height="1" fill="#000"/><rect x="4" y="11" width="2" height="1" fill="#000"/><rect x="6" y="11" width="7" height="1" fill="#0000ff"/><rect x="13" y="11" width="3" height="1" fill="#000"/><rect x="6" y="12" width="7" height="1" fill="#0000ff"/><rect x="13" y="12" width="1" height="1" fill="#000"/><rect x="6" y="13" width="3" height="1" fill="#0000ff"/><rect x="9" y="13" width="1" height="1" fill="#000"/><rect x="10" y="13" width="3" height="1" fill="#0000ff"/><rect x="13" y="13" width="1" height="1" fill="#000"/><rect x="6" y="14" width="3" height="1" fill="#0000ff"/><rect x="9" y="14" width="1" height="1" fill="#000"/><rect x="10" y="14" width="3" height="1" fill="#0000ff"/><rect x="13" y="14" width="1" height="1" fill="#000"/><rect x="6" y="15" width="8" height="1" fill="#000"/></svg>
<span class="t s" id="t51" style="left:1243.7px;top:89.5px;font-size:11.5px;color:#000;transform:scaleX(0.9351);">Opérateurs</span>
</body></html>
